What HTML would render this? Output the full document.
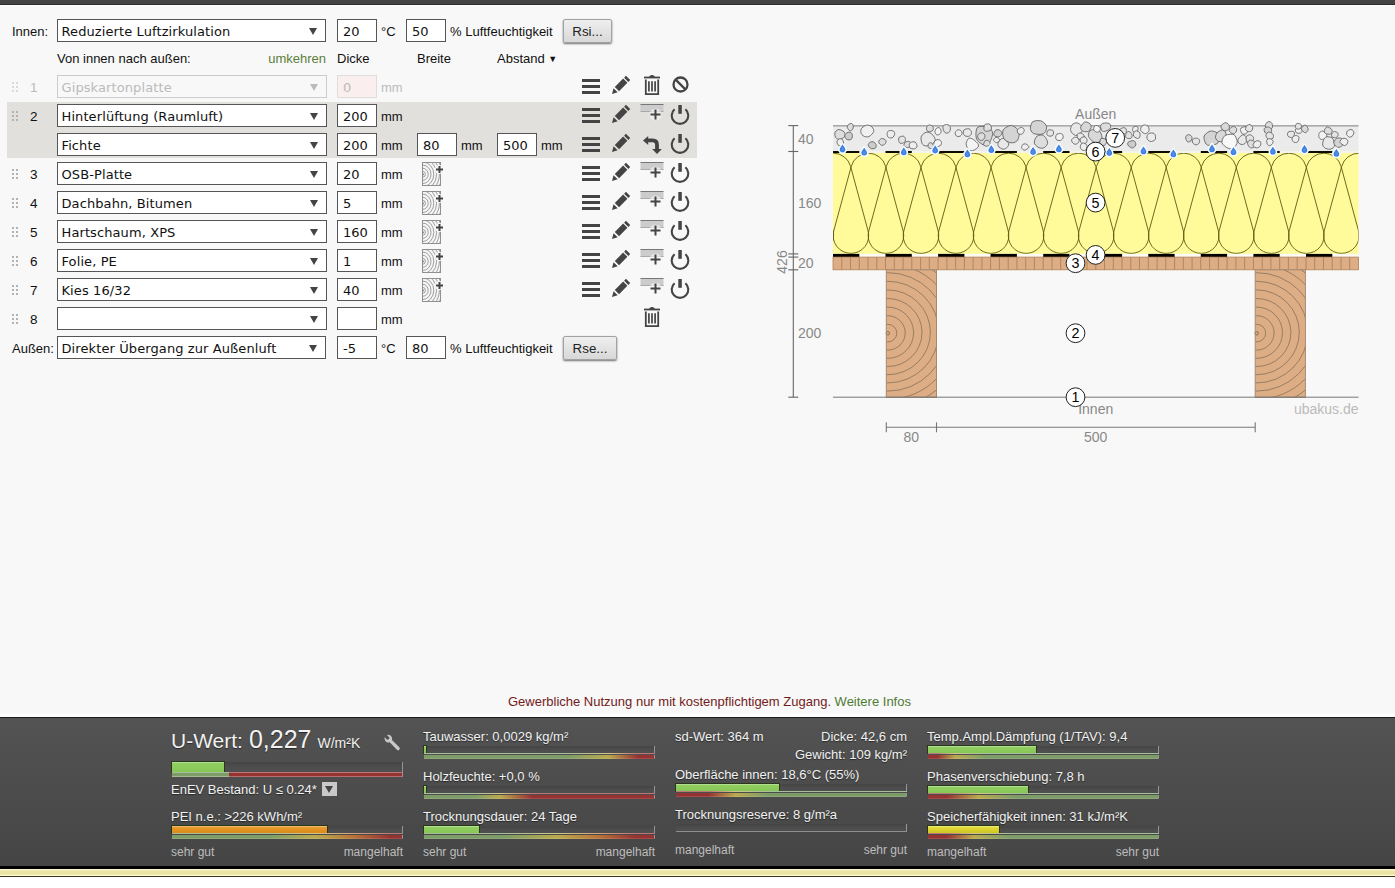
<!DOCTYPE html>
<html lang="de"><head><meta charset="utf-8"><title>U-Wert Rechner</title>
<style>
html,body{margin:0;padding:0}
body{width:1395px;height:888px;overflow:hidden;background:#fff;position:relative;font-family:"Liberation Sans",Arial,sans-serif;font-size:13px;color:#111}
#main{position:absolute;left:0;top:0;width:1395px;height:713px;background:#f8f8f8;border-bottom:1px solid #fcfcfc}
#topbar{position:absolute;left:0;top:0;width:1395px;height:4px;background:#444;border-bottom:1px solid #2e2e2e;box-shadow:0 1px 0 #fdfdfd}
.lab{position:absolute;height:23px;line-height:23px;white-space:nowrap;font-size:13px;color:#111}
.lab.dis{color:#bbb}
.lab.grn{color:#5b7d3a}
.lab.num{width:14px;text-align:left;font-size:13.5px}
.tri{font-size:9px;position:relative;top:-1px;left:0}
.sel{position:absolute;height:23px;box-sizing:border-box;border:1px solid #555;background:#fff;font-family:"DejaVu Sans",Verdana,sans-serif;font-size:13px;line-height:21px;padding-left:3.5px;padding-top:1px;letter-spacing:.1px;white-space:nowrap;color:#111}
.sel i{position:absolute;right:8.5px;top:8px;width:0;height:0;font-size:0;border-left:4px solid transparent;border-right:4px solid transparent;border-top:7px solid #444}
.sel.dis{border-color:#ccc;background:#f8f8f8;color:#bbb}
.sel.dis i{border-top-color:#bbb}
.inp{position:absolute;width:40px;height:23px;box-sizing:border-box;border:1px solid #555;background:#fff;font-family:"DejaVu Sans",Verdana,sans-serif;font-size:13px;line-height:21px;padding-left:5px;padding-top:1px;color:#111}
.inp.dis{border-color:#ddd;background:#faeeee;color:#bbb}
.btn{position:absolute;height:23.5px;box-sizing:border-box;border:1px solid #a2a2a2;border-radius:2px;background:linear-gradient(#efefef,#d8d8d8);box-shadow:0 1px 2px rgba(0,0,0,.55);font-size:13.33px;line-height:21px;padding-top:1px;text-align:center;color:#222}
.hl{position:absolute;background:#e1e0dc}
.ic{position:absolute;display:block;overflow:visible}
.diag{position:absolute;display:block}
.note{position:absolute;left:508px;top:694px;width:404px;line-height:16px;font-size:13px;white-space:nowrap;color:#731a1a}
.note span{color:#4f7a35}
.panel{position:absolute;left:0;top:717px;width:1395px;height:149px;box-sizing:border-box;border-top:1px solid #1c1c1c;background:linear-gradient(#535353,#454545)}
.pin{position:absolute;left:0;top:-718px;width:1395px;height:888px}
.pt{position:absolute;font-size:13px;line-height:16px;color:#f2f2f2;white-space:nowrap;text-shadow:0 1px 1px rgba(0,0,0,.5)}
.pf{position:absolute;font-size:12px;line-height:16px;color:#bdbdbd;white-space:nowrap}
.uw{position:absolute;white-space:nowrap;color:#f2f2f2;line-height:30px;height:30px;text-shadow:0 1px 1px rgba(0,0,0,.5)}
.u1{font-size:21px}.u2{font-size:25px;margin-left:6px}.u3{font-size:14px;margin-left:6px}
.tr{position:absolute;box-sizing:content-box;background:linear-gradient(#444,#4e4e4e 60%);border-right:1px solid #959595;margin-left:0}
.fl{position:absolute;left:0;top:0;height:100%;box-shadow:0 0 0 1px rgba(30,50,10,.75),inset 0 1px 0 rgba(255,255,255,.3)}
.ln{position:absolute;height:1px}
.st{position:absolute;height:3px;border-bottom:1px solid rgba(255,255,255,.12);border-right:1px solid #959595}
.st.big{border-bottom-color:rgba(255,255,255,.3)}
.dd{position:absolute;width:15px;height:14px;background:#c9c9c9}
.dd b{position:absolute;left:3px;top:4px;width:0;height:0;border-left:4.5px solid transparent;border-right:4.5px solid transparent;border-top:7px solid #444}
.blk{position:absolute;left:0;top:866px;width:1395px;height:3px;background:#000}
.ystrip{position:absolute;left:0;top:869px;width:1395px;height:7px;background:linear-gradient(#fffbd0,#ece6a8 30%,#e8e2a2 70%,#fffbd0 95%);border-bottom:1px solid #3a3820}
</style></head><body>
<div id="main">
<div id="topbar"></div>
<div class="lab" style="left:12px;top:20px;">Innen:</div>
<div class="sel" style="left:57px;top:19px;width:269px"><span>Reduzierte Luftzirkulation</span><i></i></div>
<div class="inp" style="left:337px;top:19px">20</div>
<div class="lab" style="left:381px;top:20px;">°C</div>
<div class="inp" style="left:406px;top:19px">50</div>
<div class="lab" style="left:450px;top:20px;">% Luftfeuchtigkeit</div>
<div class="btn" style="left:563px;top:19px;width:49px">Rsi...</div>
<div class="lab" style="left:57px;top:47px;">Von innen nach außen:</div>
<div class="lab grn" style="left:226px;top:47px;width:100px;text-align:right">umkehren</div>
<div class="lab" style="left:337px;top:47px;">Dicke</div>
<div class="lab" style="left:417px;top:47px;">Breite</div>
<div class="lab" style="left:497px;top:47px;">Abstand <span class="tri">&#9660;</span></div>
<div class="hl" style="left:7px;top:102px;width:690px;height:56px"></div>
<svg class="ic" style="left:12px;top:82px" width="6" height="10" viewBox="0 0 6 10"><rect x="0" y="0" width="2" height="2" fill="#dadada"/><rect x="4" y="0" width="2" height="2" fill="#dadada"/><rect x="0" y="4" width="2" height="2" fill="#dadada"/><rect x="4" y="4" width="2" height="2" fill="#dadada"/><rect x="0" y="8" width="2" height="2" fill="#dadada"/><rect x="4" y="8" width="2" height="2" fill="#dadada"/></svg>
<div class="lab num dis" style="left:30px;top:76px;">1</div>
<div class="sel dis" style="left:57px;top:75px;width:270px"><span>Gipskartonplatte</span><i></i></div>
<div class="inp dis" style="left:337px;top:75px">0</div>
<div class="lab dis" style="left:381px;top:76px;">mm</div>
<svg class="ic" style="left:582px;top:79px" width="18" height="15" viewBox="0 0 18 15"><rect x="0" y="0" width="18" height="3" fill="#444"/><rect x="0" y="6" width="18" height="3" fill="#444"/><rect x="0" y="12" width="18" height="3" fill="#444"/></svg>
<svg class="ic" style="left:612px;top:76px" width="18.4" height="18.4" viewBox="0 0 19 19"><g fill="#444"><polygon points="0,18.5 1.6,12.6 5.9,16.9"/><polygon points="2.9,11.3 11.5,2.7 15.9,7.1 7.3,15.7"/><polygon points="12.5,1.7 14.4,-0.2 18.8,4.2 16.9,6.1"/></g></svg>
<svg class="ic" style="left:644px;top:75px" width="16" height="20" viewBox="0 0 16 20"><g fill="none" stroke="#444"><path d="M0 2.5H16" stroke-width="1.8"/><path d="M5.6 1.4Q8 -0.4 10.4 1.4Z" stroke-width="1" fill="#444"/><path d="M1.8 4.6V19.1H14.2V4.6" stroke-width="1.8"/><path d="M4.9 6.3V16.4M8 6.3V16.4M11.1 6.3V16.4" stroke-width="1.7"/></g></svg>
<svg class="ic" style="left:671.5px;top:75.5px" width="17" height="17" viewBox="0 0 17 17"><circle cx="8.5" cy="8.5" r="7" fill="none" stroke="#444" stroke-width="2.3"/><path d="M3.6 3.6L13.4 13.4" stroke="#444" stroke-width="2.3"/></svg>
<svg class="ic" style="left:12px;top:111px" width="6" height="10" viewBox="0 0 6 10"><rect x="0" y="0" width="2" height="2" fill="#b2b2b2"/><rect x="4" y="0" width="2" height="2" fill="#b2b2b2"/><rect x="0" y="4" width="2" height="2" fill="#b2b2b2"/><rect x="4" y="4" width="2" height="2" fill="#b2b2b2"/><rect x="0" y="8" width="2" height="2" fill="#b2b2b2"/><rect x="4" y="8" width="2" height="2" fill="#b2b2b2"/></svg>
<div class="lab num" style="left:30px;top:105px;">2</div>
<div class="sel" style="left:57px;top:104px;width:270px"><span>Hinterlüftung (Raumluft)</span><i></i></div>
<div class="inp" style="left:337px;top:104px">200</div>
<div class="lab" style="left:381px;top:105px;">mm</div>
<svg class="ic" style="left:582px;top:108px" width="18" height="15" viewBox="0 0 18 15"><rect x="0" y="0" width="18" height="3" fill="#444"/><rect x="0" y="6" width="18" height="3" fill="#444"/><rect x="0" y="12" width="18" height="3" fill="#444"/></svg>
<svg class="ic" style="left:612px;top:105px" width="18.4" height="18.4" viewBox="0 0 19 19"><g fill="#444"><polygon points="0,18.5 1.6,12.6 5.9,16.9"/><polygon points="2.9,11.3 11.5,2.7 15.9,7.1 7.3,15.7"/><polygon points="12.5,1.7 14.4,-0.2 18.8,4.2 16.9,6.1"/></g></svg>
<svg class="ic" style="left:640px;top:104px" width="24" height="17" viewBox="0 0 24 17"><rect x="0.5" y="0" width="23" height="8" fill="#ccc"/><rect x="0.5" y="0" width="23" height="1" fill="#777"/><rect x="0.5" y="7" width="23" height="1" fill="#aaa"/><circle cx="15.5" cy="10.5" r="6" fill="#f6f6f4" fill-opacity=".65"/><path d="M15.5 5.5V15.5M10.5 10.5H20.5" stroke="#444" stroke-width="2" fill="none"/></svg>
<svg class="ic" style="left:670px;top:105px" width="20" height="21" viewBox="0 0 20 21"><path d="M4.6 4.3A8.3 8.3 0 1 0 15.4 4.3" fill="none" stroke="#444" stroke-width="2.1"/><rect x="8.3" y="0" width="3.5" height="8.8" fill="#444"/></svg>
<div class="sel" style="left:57px;top:133px;width:270px"><span>Fichte</span><i></i></div>
<div class="inp" style="left:337px;top:133px">200</div>
<div class="lab" style="left:381px;top:134px;">mm</div>
<div class="inp" style="left:417px;top:133px">80</div>
<div class="lab" style="left:461px;top:134px;">mm</div>
<div class="inp" style="left:497px;top:133px">500</div>
<div class="lab" style="left:541px;top:134px;">mm</div>
<svg class="ic" style="left:582px;top:137px" width="18" height="15" viewBox="0 0 18 15"><rect x="0" y="0" width="18" height="3" fill="#444"/><rect x="0" y="6" width="18" height="3" fill="#444"/><rect x="0" y="12" width="18" height="3" fill="#444"/></svg>
<svg class="ic" style="left:612px;top:134px" width="18.4" height="18.4" viewBox="0 0 19 19"><g fill="#444"><polygon points="0,18.5 1.6,12.6 5.9,16.9"/><polygon points="2.9,11.3 11.5,2.7 15.9,7.1 7.3,15.7"/><polygon points="12.5,1.7 14.4,-0.2 18.8,4.2 16.9,6.1"/></g></svg>
<svg class="ic" style="left:642px;top:134px" width="21" height="21" viewBox="0 0 21 21"><path d="M5.5 6.4H10.6Q15 6.4 15 10.8V15.4" fill="none" stroke="#444" stroke-width="3.8"/><polygon points="1,6.4 6.2,1.9 6.2,10.9" fill="#444"/><polygon points="15,20.1 10.1,15 19.9,15" fill="#444"/></svg>
<svg class="ic" style="left:670px;top:134px" width="20" height="21" viewBox="0 0 20 21"><path d="M4.6 4.3A8.3 8.3 0 1 0 15.4 4.3" fill="none" stroke="#444" stroke-width="2.1"/><rect x="8.3" y="0" width="3.5" height="8.8" fill="#444"/></svg>
<svg class="ic" style="left:12px;top:169px" width="6" height="10" viewBox="0 0 6 10"><rect x="0" y="0" width="2" height="2" fill="#b2b2b2"/><rect x="4" y="0" width="2" height="2" fill="#b2b2b2"/><rect x="0" y="4" width="2" height="2" fill="#b2b2b2"/><rect x="4" y="4" width="2" height="2" fill="#b2b2b2"/><rect x="0" y="8" width="2" height="2" fill="#b2b2b2"/><rect x="4" y="8" width="2" height="2" fill="#b2b2b2"/></svg>
<div class="lab num" style="left:30px;top:163px;">3</div>
<div class="sel" style="left:57px;top:162px;width:270px"><span>OSB-Platte</span><i></i></div>
<div class="inp" style="left:337px;top:162px">20</div>
<div class="lab" style="left:381px;top:163px;">mm</div>
<svg class="ic" style="left:422px;top:162px" width="22" height="24" viewBox="0 0 22 24"><defs><clipPath id="wc422_162"><rect x="0.5" y="0.5" width="18" height="23"/></clipPath></defs><rect x="0.5" y="0.5" width="18" height="23" fill="#f6f6f6" stroke="#919191" stroke-width="1"/><g clip-path="url(#wc422_162)" fill="none" stroke="#8e8e8e" stroke-width="0.85"><ellipse cx="0.8" cy="12.3" rx="2.6" ry="2.9"/><ellipse cx="0.8" cy="12.3" rx="5.4" ry="6.0"/><ellipse cx="0.8" cy="12.3" rx="8.2" ry="9.2"/><ellipse cx="0.8" cy="12.3" rx="11.0" ry="12.3"/><ellipse cx="0.8" cy="12.3" rx="13.8" ry="15.5"/><ellipse cx="0.8" cy="12.3" rx="16.6" ry="18.6"/><ellipse cx="0.8" cy="12.3" rx="19.4" ry="21.7"/><ellipse cx="0.8" cy="12.3" rx="22.2" ry="24.9"/><ellipse cx="0.8" cy="12.3" rx="25" ry="28.0"/></g><circle cx="1.3" cy="12.3" r="0.9" fill="#888"/><circle cx="17.5" cy="7.5" r="4.6" fill="#f8f8f8"/><path d="M17.5 4V11M14 7.5H21" stroke="#444" stroke-width="2" fill="none"/></svg>
<svg class="ic" style="left:582px;top:166px" width="18" height="15" viewBox="0 0 18 15"><rect x="0" y="0" width="18" height="3" fill="#444"/><rect x="0" y="6" width="18" height="3" fill="#444"/><rect x="0" y="12" width="18" height="3" fill="#444"/></svg>
<svg class="ic" style="left:612px;top:163px" width="18.4" height="18.4" viewBox="0 0 19 19"><g fill="#444"><polygon points="0,18.5 1.6,12.6 5.9,16.9"/><polygon points="2.9,11.3 11.5,2.7 15.9,7.1 7.3,15.7"/><polygon points="12.5,1.7 14.4,-0.2 18.8,4.2 16.9,6.1"/></g></svg>
<svg class="ic" style="left:640px;top:162px" width="24" height="17" viewBox="0 0 24 17"><rect x="0.5" y="0" width="23" height="8" fill="#ccc"/><rect x="0.5" y="0" width="23" height="1" fill="#777"/><rect x="0.5" y="7" width="23" height="1" fill="#aaa"/><circle cx="15.5" cy="10.5" r="6" fill="#f6f6f4" fill-opacity=".65"/><path d="M15.5 5.5V15.5M10.5 10.5H20.5" stroke="#444" stroke-width="2" fill="none"/></svg>
<svg class="ic" style="left:670px;top:163px" width="20" height="21" viewBox="0 0 20 21"><path d="M4.6 4.3A8.3 8.3 0 1 0 15.4 4.3" fill="none" stroke="#444" stroke-width="2.1"/><rect x="8.3" y="0" width="3.5" height="8.8" fill="#444"/></svg>
<svg class="ic" style="left:12px;top:198px" width="6" height="10" viewBox="0 0 6 10"><rect x="0" y="0" width="2" height="2" fill="#b2b2b2"/><rect x="4" y="0" width="2" height="2" fill="#b2b2b2"/><rect x="0" y="4" width="2" height="2" fill="#b2b2b2"/><rect x="4" y="4" width="2" height="2" fill="#b2b2b2"/><rect x="0" y="8" width="2" height="2" fill="#b2b2b2"/><rect x="4" y="8" width="2" height="2" fill="#b2b2b2"/></svg>
<div class="lab num" style="left:30px;top:192px;">4</div>
<div class="sel" style="left:57px;top:191px;width:270px"><span>Dachbahn, Bitumen</span><i></i></div>
<div class="inp" style="left:337px;top:191px">5</div>
<div class="lab" style="left:381px;top:192px;">mm</div>
<svg class="ic" style="left:422px;top:191px" width="22" height="24" viewBox="0 0 22 24"><defs><clipPath id="wc422_191"><rect x="0.5" y="0.5" width="18" height="23"/></clipPath></defs><rect x="0.5" y="0.5" width="18" height="23" fill="#f6f6f6" stroke="#919191" stroke-width="1"/><g clip-path="url(#wc422_191)" fill="none" stroke="#8e8e8e" stroke-width="0.85"><ellipse cx="0.8" cy="12.3" rx="2.6" ry="2.9"/><ellipse cx="0.8" cy="12.3" rx="5.4" ry="6.0"/><ellipse cx="0.8" cy="12.3" rx="8.2" ry="9.2"/><ellipse cx="0.8" cy="12.3" rx="11.0" ry="12.3"/><ellipse cx="0.8" cy="12.3" rx="13.8" ry="15.5"/><ellipse cx="0.8" cy="12.3" rx="16.6" ry="18.6"/><ellipse cx="0.8" cy="12.3" rx="19.4" ry="21.7"/><ellipse cx="0.8" cy="12.3" rx="22.2" ry="24.9"/><ellipse cx="0.8" cy="12.3" rx="25" ry="28.0"/></g><circle cx="1.3" cy="12.3" r="0.9" fill="#888"/><circle cx="17.5" cy="7.5" r="4.6" fill="#f8f8f8"/><path d="M17.5 4V11M14 7.5H21" stroke="#444" stroke-width="2" fill="none"/></svg>
<svg class="ic" style="left:582px;top:195px" width="18" height="15" viewBox="0 0 18 15"><rect x="0" y="0" width="18" height="3" fill="#444"/><rect x="0" y="6" width="18" height="3" fill="#444"/><rect x="0" y="12" width="18" height="3" fill="#444"/></svg>
<svg class="ic" style="left:612px;top:192px" width="18.4" height="18.4" viewBox="0 0 19 19"><g fill="#444"><polygon points="0,18.5 1.6,12.6 5.9,16.9"/><polygon points="2.9,11.3 11.5,2.7 15.9,7.1 7.3,15.7"/><polygon points="12.5,1.7 14.4,-0.2 18.8,4.2 16.9,6.1"/></g></svg>
<svg class="ic" style="left:640px;top:191px" width="24" height="17" viewBox="0 0 24 17"><rect x="0.5" y="0" width="23" height="8" fill="#ccc"/><rect x="0.5" y="0" width="23" height="1" fill="#777"/><rect x="0.5" y="7" width="23" height="1" fill="#aaa"/><circle cx="15.5" cy="10.5" r="6" fill="#f6f6f4" fill-opacity=".65"/><path d="M15.5 5.5V15.5M10.5 10.5H20.5" stroke="#444" stroke-width="2" fill="none"/></svg>
<svg class="ic" style="left:670px;top:192px" width="20" height="21" viewBox="0 0 20 21"><path d="M4.6 4.3A8.3 8.3 0 1 0 15.4 4.3" fill="none" stroke="#444" stroke-width="2.1"/><rect x="8.3" y="0" width="3.5" height="8.8" fill="#444"/></svg>
<svg class="ic" style="left:12px;top:227px" width="6" height="10" viewBox="0 0 6 10"><rect x="0" y="0" width="2" height="2" fill="#b2b2b2"/><rect x="4" y="0" width="2" height="2" fill="#b2b2b2"/><rect x="0" y="4" width="2" height="2" fill="#b2b2b2"/><rect x="4" y="4" width="2" height="2" fill="#b2b2b2"/><rect x="0" y="8" width="2" height="2" fill="#b2b2b2"/><rect x="4" y="8" width="2" height="2" fill="#b2b2b2"/></svg>
<div class="lab num" style="left:30px;top:221px;">5</div>
<div class="sel" style="left:57px;top:220px;width:270px"><span>Hartschaum, XPS</span><i></i></div>
<div class="inp" style="left:337px;top:220px">160</div>
<div class="lab" style="left:381px;top:221px;">mm</div>
<svg class="ic" style="left:422px;top:220px" width="22" height="24" viewBox="0 0 22 24"><defs><clipPath id="wc422_220"><rect x="0.5" y="0.5" width="18" height="23"/></clipPath></defs><rect x="0.5" y="0.5" width="18" height="23" fill="#f6f6f6" stroke="#919191" stroke-width="1"/><g clip-path="url(#wc422_220)" fill="none" stroke="#8e8e8e" stroke-width="0.85"><ellipse cx="0.8" cy="12.3" rx="2.6" ry="2.9"/><ellipse cx="0.8" cy="12.3" rx="5.4" ry="6.0"/><ellipse cx="0.8" cy="12.3" rx="8.2" ry="9.2"/><ellipse cx="0.8" cy="12.3" rx="11.0" ry="12.3"/><ellipse cx="0.8" cy="12.3" rx="13.8" ry="15.5"/><ellipse cx="0.8" cy="12.3" rx="16.6" ry="18.6"/><ellipse cx="0.8" cy="12.3" rx="19.4" ry="21.7"/><ellipse cx="0.8" cy="12.3" rx="22.2" ry="24.9"/><ellipse cx="0.8" cy="12.3" rx="25" ry="28.0"/></g><circle cx="1.3" cy="12.3" r="0.9" fill="#888"/><circle cx="17.5" cy="7.5" r="4.6" fill="#f8f8f8"/><path d="M17.5 4V11M14 7.5H21" stroke="#444" stroke-width="2" fill="none"/></svg>
<svg class="ic" style="left:582px;top:224px" width="18" height="15" viewBox="0 0 18 15"><rect x="0" y="0" width="18" height="3" fill="#444"/><rect x="0" y="6" width="18" height="3" fill="#444"/><rect x="0" y="12" width="18" height="3" fill="#444"/></svg>
<svg class="ic" style="left:612px;top:221px" width="18.4" height="18.4" viewBox="0 0 19 19"><g fill="#444"><polygon points="0,18.5 1.6,12.6 5.9,16.9"/><polygon points="2.9,11.3 11.5,2.7 15.9,7.1 7.3,15.7"/><polygon points="12.5,1.7 14.4,-0.2 18.8,4.2 16.9,6.1"/></g></svg>
<svg class="ic" style="left:640px;top:220px" width="24" height="17" viewBox="0 0 24 17"><rect x="0.5" y="0" width="23" height="8" fill="#ccc"/><rect x="0.5" y="0" width="23" height="1" fill="#777"/><rect x="0.5" y="7" width="23" height="1" fill="#aaa"/><circle cx="15.5" cy="10.5" r="6" fill="#f6f6f4" fill-opacity=".65"/><path d="M15.5 5.5V15.5M10.5 10.5H20.5" stroke="#444" stroke-width="2" fill="none"/></svg>
<svg class="ic" style="left:670px;top:221px" width="20" height="21" viewBox="0 0 20 21"><path d="M4.6 4.3A8.3 8.3 0 1 0 15.4 4.3" fill="none" stroke="#444" stroke-width="2.1"/><rect x="8.3" y="0" width="3.5" height="8.8" fill="#444"/></svg>
<svg class="ic" style="left:12px;top:256px" width="6" height="10" viewBox="0 0 6 10"><rect x="0" y="0" width="2" height="2" fill="#b2b2b2"/><rect x="4" y="0" width="2" height="2" fill="#b2b2b2"/><rect x="0" y="4" width="2" height="2" fill="#b2b2b2"/><rect x="4" y="4" width="2" height="2" fill="#b2b2b2"/><rect x="0" y="8" width="2" height="2" fill="#b2b2b2"/><rect x="4" y="8" width="2" height="2" fill="#b2b2b2"/></svg>
<div class="lab num" style="left:30px;top:250px;">6</div>
<div class="sel" style="left:57px;top:249px;width:270px"><span>Folie, PE</span><i></i></div>
<div class="inp" style="left:337px;top:249px">1</div>
<div class="lab" style="left:381px;top:250px;">mm</div>
<svg class="ic" style="left:422px;top:249px" width="22" height="24" viewBox="0 0 22 24"><defs><clipPath id="wc422_249"><rect x="0.5" y="0.5" width="18" height="23"/></clipPath></defs><rect x="0.5" y="0.5" width="18" height="23" fill="#f6f6f6" stroke="#919191" stroke-width="1"/><g clip-path="url(#wc422_249)" fill="none" stroke="#8e8e8e" stroke-width="0.85"><ellipse cx="0.8" cy="12.3" rx="2.6" ry="2.9"/><ellipse cx="0.8" cy="12.3" rx="5.4" ry="6.0"/><ellipse cx="0.8" cy="12.3" rx="8.2" ry="9.2"/><ellipse cx="0.8" cy="12.3" rx="11.0" ry="12.3"/><ellipse cx="0.8" cy="12.3" rx="13.8" ry="15.5"/><ellipse cx="0.8" cy="12.3" rx="16.6" ry="18.6"/><ellipse cx="0.8" cy="12.3" rx="19.4" ry="21.7"/><ellipse cx="0.8" cy="12.3" rx="22.2" ry="24.9"/><ellipse cx="0.8" cy="12.3" rx="25" ry="28.0"/></g><circle cx="1.3" cy="12.3" r="0.9" fill="#888"/><circle cx="17.5" cy="7.5" r="4.6" fill="#f8f8f8"/><path d="M17.5 4V11M14 7.5H21" stroke="#444" stroke-width="2" fill="none"/></svg>
<svg class="ic" style="left:582px;top:253px" width="18" height="15" viewBox="0 0 18 15"><rect x="0" y="0" width="18" height="3" fill="#444"/><rect x="0" y="6" width="18" height="3" fill="#444"/><rect x="0" y="12" width="18" height="3" fill="#444"/></svg>
<svg class="ic" style="left:612px;top:250px" width="18.4" height="18.4" viewBox="0 0 19 19"><g fill="#444"><polygon points="0,18.5 1.6,12.6 5.9,16.9"/><polygon points="2.9,11.3 11.5,2.7 15.9,7.1 7.3,15.7"/><polygon points="12.5,1.7 14.4,-0.2 18.8,4.2 16.9,6.1"/></g></svg>
<svg class="ic" style="left:640px;top:249px" width="24" height="17" viewBox="0 0 24 17"><rect x="0.5" y="0" width="23" height="8" fill="#ccc"/><rect x="0.5" y="0" width="23" height="1" fill="#777"/><rect x="0.5" y="7" width="23" height="1" fill="#aaa"/><circle cx="15.5" cy="10.5" r="6" fill="#f6f6f4" fill-opacity=".65"/><path d="M15.5 5.5V15.5M10.5 10.5H20.5" stroke="#444" stroke-width="2" fill="none"/></svg>
<svg class="ic" style="left:670px;top:250px" width="20" height="21" viewBox="0 0 20 21"><path d="M4.6 4.3A8.3 8.3 0 1 0 15.4 4.3" fill="none" stroke="#444" stroke-width="2.1"/><rect x="8.3" y="0" width="3.5" height="8.8" fill="#444"/></svg>
<svg class="ic" style="left:12px;top:285px" width="6" height="10" viewBox="0 0 6 10"><rect x="0" y="0" width="2" height="2" fill="#b2b2b2"/><rect x="4" y="0" width="2" height="2" fill="#b2b2b2"/><rect x="0" y="4" width="2" height="2" fill="#b2b2b2"/><rect x="4" y="4" width="2" height="2" fill="#b2b2b2"/><rect x="0" y="8" width="2" height="2" fill="#b2b2b2"/><rect x="4" y="8" width="2" height="2" fill="#b2b2b2"/></svg>
<div class="lab num" style="left:30px;top:279px;">7</div>
<div class="sel" style="left:57px;top:278px;width:270px"><span>Kies 16/32</span><i></i></div>
<div class="inp" style="left:337px;top:278px">40</div>
<div class="lab" style="left:381px;top:279px;">mm</div>
<svg class="ic" style="left:422px;top:278px" width="22" height="24" viewBox="0 0 22 24"><defs><clipPath id="wc422_278"><rect x="0.5" y="0.5" width="18" height="23"/></clipPath></defs><rect x="0.5" y="0.5" width="18" height="23" fill="#f6f6f6" stroke="#919191" stroke-width="1"/><g clip-path="url(#wc422_278)" fill="none" stroke="#8e8e8e" stroke-width="0.85"><ellipse cx="0.8" cy="12.3" rx="2.6" ry="2.9"/><ellipse cx="0.8" cy="12.3" rx="5.4" ry="6.0"/><ellipse cx="0.8" cy="12.3" rx="8.2" ry="9.2"/><ellipse cx="0.8" cy="12.3" rx="11.0" ry="12.3"/><ellipse cx="0.8" cy="12.3" rx="13.8" ry="15.5"/><ellipse cx="0.8" cy="12.3" rx="16.6" ry="18.6"/><ellipse cx="0.8" cy="12.3" rx="19.4" ry="21.7"/><ellipse cx="0.8" cy="12.3" rx="22.2" ry="24.9"/><ellipse cx="0.8" cy="12.3" rx="25" ry="28.0"/></g><circle cx="1.3" cy="12.3" r="0.9" fill="#888"/><circle cx="17.5" cy="7.5" r="4.6" fill="#f8f8f8"/><path d="M17.5 4V11M14 7.5H21" stroke="#444" stroke-width="2" fill="none"/></svg>
<svg class="ic" style="left:582px;top:282px" width="18" height="15" viewBox="0 0 18 15"><rect x="0" y="0" width="18" height="3" fill="#444"/><rect x="0" y="6" width="18" height="3" fill="#444"/><rect x="0" y="12" width="18" height="3" fill="#444"/></svg>
<svg class="ic" style="left:612px;top:279px" width="18.4" height="18.4" viewBox="0 0 19 19"><g fill="#444"><polygon points="0,18.5 1.6,12.6 5.9,16.9"/><polygon points="2.9,11.3 11.5,2.7 15.9,7.1 7.3,15.7"/><polygon points="12.5,1.7 14.4,-0.2 18.8,4.2 16.9,6.1"/></g></svg>
<svg class="ic" style="left:640px;top:278px" width="24" height="17" viewBox="0 0 24 17"><rect x="0.5" y="0" width="23" height="8" fill="#ccc"/><rect x="0.5" y="0" width="23" height="1" fill="#777"/><rect x="0.5" y="7" width="23" height="1" fill="#aaa"/><circle cx="15.5" cy="10.5" r="6" fill="#f6f6f4" fill-opacity=".65"/><path d="M15.5 5.5V15.5M10.5 10.5H20.5" stroke="#444" stroke-width="2" fill="none"/></svg>
<svg class="ic" style="left:670px;top:279px" width="20" height="21" viewBox="0 0 20 21"><path d="M4.6 4.3A8.3 8.3 0 1 0 15.4 4.3" fill="none" stroke="#444" stroke-width="2.1"/><rect x="8.3" y="0" width="3.5" height="8.8" fill="#444"/></svg>
<svg class="ic" style="left:12px;top:314px" width="6" height="10" viewBox="0 0 6 10"><rect x="0" y="0" width="2" height="2" fill="#b2b2b2"/><rect x="4" y="0" width="2" height="2" fill="#b2b2b2"/><rect x="0" y="4" width="2" height="2" fill="#b2b2b2"/><rect x="4" y="4" width="2" height="2" fill="#b2b2b2"/><rect x="0" y="8" width="2" height="2" fill="#b2b2b2"/><rect x="4" y="8" width="2" height="2" fill="#b2b2b2"/></svg>
<div class="lab num" style="left:30px;top:308px;">8</div>
<div class="sel" style="left:57px;top:307px;width:270px"><span></span><i></i></div>
<div class="inp" style="left:337px;top:307px"></div>
<div class="lab" style="left:381px;top:308px;">mm</div>
<svg class="ic" style="left:644px;top:307px" width="16" height="20" viewBox="0 0 16 20"><g fill="none" stroke="#444"><path d="M0 2.5H16" stroke-width="1.8"/><path d="M5.6 1.4Q8 -0.4 10.4 1.4Z" stroke-width="1" fill="#444"/><path d="M1.8 4.6V19.1H14.2V4.6" stroke-width="1.8"/><path d="M4.9 6.3V16.4M8 6.3V16.4M11.1 6.3V16.4" stroke-width="1.7"/></g></svg>
<div class="lab" style="left:12px;top:337px;">Außen:</div>
<div class="sel" style="left:57px;top:336px;width:269px"><span>Direkter Übergang zur Außenluft</span><i></i></div>
<div class="inp" style="left:337px;top:336px">-5</div>
<div class="lab" style="left:381px;top:337px;">°C</div>
<div class="inp" style="left:406px;top:336px">80</div>
<div class="lab" style="left:450px;top:337px;">% Luftfeuchtigkeit</div>
<div class="btn" style="left:563px;top:336px;width:54px">Rse...</div>
<svg class="diag" style="left:760px;top:95px" width="635" height="370" viewBox="760 95 635 370">
<defs>
<clipPath id="cpx"><rect x="833.0" y="153.0" width="525.5" height="100.9"/></clipPath>
<clipPath id="cpb1"><rect x="886.3" y="269.8" width="50.2" height="127.39999999999998"/></clipPath>
<clipPath id="cpb2"><rect x="1255.2" y="269.8" width="50.2" height="127.39999999999998"/></clipPath>
<radialGradient id="dg" cx="0.5" cy="0.6" r="0.6"><stop offset="0" stop-color="#5594ee"/><stop offset="1" stop-color="#2f6fd6"/></radialGradient>
</defs>
<rect x="833.0" y="125.6" width="525.5" height="25.400000000000006" fill="#ebebeb"/>
<rect x="833.0" y="125.0" width="525.5" height="1.6" fill="#aaa"/>
<g stroke="#555" stroke-width="0.8">
<path d="M852.9 124.8Q853.5 125.8 853.3 127.0L853.1 128.0Q852.9 129.3 852.1 129.9L851.5 130.4Q850.6 131.0 849.8 130.5L849.2 130.2Q848.4 129.7 847.8 128.6L847.4 127.8Q846.9 126.7 847.6 125.8L848.1 125.0Q848.7 124.1 849.9 123.8L850.8 123.5Q851.9 123.2 852.5 124.1Z" fill="#ddd"/>
<path d="M834.8 134.2Q834.6 132.2 836.1 131.0L837.2 130.1Q838.7 128.9 840.7 129.9L842.3 130.6Q844.4 131.6 844.8 133.3L845.1 134.6Q845.5 136.4 843.4 137.7L841.8 138.7Q839.7 140.0 838.1 139.2L836.8 138.6Q835.2 137.7 835.0 135.7Z" fill="#ddd"/>
<path d="M852.3 137.1Q852.2 138.8 851.0 139.3L850.2 139.7Q849.0 140.2 847.8 139.7L846.9 139.4Q845.7 138.9 845.2 137.6L844.9 136.6Q844.5 135.3 845.3 134.4L846.0 133.7Q846.8 132.7 848.0 132.3L848.9 132.1Q850.0 131.7 850.9 132.6L851.6 133.2Q852.5 134.1 852.4 135.8Z" fill="#ccc"/>
<path d="M842.2 139.5Q843.1 140.1 843.3 141.2L843.4 142.0Q843.6 143.1 843.4 143.8L843.3 144.3Q843.2 145.0 842.4 145.3L841.7 145.6Q840.9 145.9 840.0 145.8L839.2 145.7Q838.3 145.6 837.7 144.2L837.2 143.2Q836.6 141.8 837.2 140.9L837.7 140.2Q838.3 139.4 839.2 139.1L839.8 138.8Q840.7 138.5 841.5 139.1Z" fill="#eee"/>
<path d="M873.7 131.4Q873.6 132.6 871.9 134.2L870.6 135.5Q868.9 137.1 867.2 136.9L865.8 136.8Q864.1 136.7 862.9 135.5L861.9 134.6Q860.8 133.4 860.8 131.6L860.9 130.2Q860.9 128.4 862.9 127.1L864.4 126.1Q866.4 124.8 868.2 125.2L869.6 125.6Q871.3 126.0 872.2 127.2L872.9 128.1Q873.8 129.2 873.7 130.5Z" fill="#f0f0f0"/>
<path d="M889.5 130.6Q890.6 130.3 892.0 130.7L893.1 131.1Q894.5 131.6 894.6 132.7L894.7 133.5Q894.9 134.6 893.9 135.9L893.2 137.0Q892.2 138.3 890.7 138.0L889.5 137.7Q888.0 137.4 887.6 136.5L887.4 135.8Q887.0 135.0 887.2 133.6L887.4 132.6Q887.6 131.2 888.7 130.9Z" fill="#eee"/>
<path d="M885.3 143.6Q884.8 144.4 883.7 144.9L882.9 145.2Q881.8 145.7 880.7 144.8L879.9 144.1Q878.9 143.2 878.8 142.4L878.8 141.8Q878.7 141.0 879.6 139.9L880.4 139.2Q881.4 138.1 882.9 138.7L884.0 139.1Q885.5 139.6 885.8 140.5L886.0 141.2Q886.2 142.1 885.7 143.0Z" fill="#ddd"/>
<path d="M869.1 147.0Q867.7 145.8 868.4 144.5L868.9 143.5Q869.6 142.2 870.8 141.9L871.8 141.7Q873.1 141.4 874.2 142.4L875.1 143.2Q876.2 144.3 876.2 145.6L876.1 146.7Q876.1 148.1 874.4 148.5L873.1 148.7Q871.5 149.1 870.1 147.9Z" fill="#ccc"/>
<path d="M905.4 140.8Q905.3 142.3 903.6 142.8L902.3 143.2Q900.6 143.7 899.9 143.1L899.4 142.6Q898.8 142.0 898.7 140.3L898.6 139.0Q898.4 137.3 900.2 136.7L901.6 136.3Q903.5 135.7 904.2 136.6L904.8 137.3Q905.5 138.2 905.4 139.7Z" fill="#e4e4e4"/>
<path d="M910.7 143.3Q911.0 144.3 910.7 145.0L910.5 145.5Q910.2 146.2 909.4 146.8L908.7 147.3Q907.8 147.9 906.7 147.4L905.9 147.0Q904.8 146.5 904.4 146.2L904.0 145.9Q903.6 145.6 904.1 144.4L904.5 143.4Q905.0 142.2 905.8 141.9L906.5 141.6Q907.3 141.3 908.3 141.4L909.1 141.5Q910.1 141.6 910.4 142.6Z" fill="#ddd"/>
<path d="M910.6 142.6Q911.4 141.9 912.9 141.8L914.0 141.8Q915.5 141.7 916.2 143.4L916.8 144.7Q917.5 146.4 916.6 147.4L915.8 148.1Q914.8 149.1 913.0 148.9L911.5 148.7Q909.7 148.5 909.5 146.9L909.3 145.6Q909.0 143.9 909.9 143.2Z" fill="#eee"/>
<path d="M928.5 125.3Q929.3 124.7 930.2 125.0L931.0 125.3Q932.0 125.7 932.5 126.2L932.9 126.7Q933.4 127.3 933.3 128.4L933.3 129.3Q933.2 130.5 931.8 131.0L930.8 131.4Q929.4 131.9 928.4 131.5L927.7 131.2Q926.7 130.7 926.6 129.6L926.5 128.8Q926.5 127.7 926.7 127.2L926.9 126.9Q927.1 126.4 927.9 125.8Z" fill="#ddd"/>
<path d="M936.9 134.9Q936.0 134.8 935.6 133.6L935.2 132.7Q934.8 131.5 935.3 130.4L935.6 129.5Q936.1 128.3 937.1 128.0L937.8 127.7Q938.8 127.4 939.5 127.9L940.0 128.3Q940.7 128.8 940.9 130.2L941.1 131.3Q941.2 132.8 940.3 133.5L939.6 134.1Q938.7 134.9 937.7 134.9Z" fill="#f4f4f4"/>
<path d="M950.1 130.3Q949.8 132.0 948.8 132.5L948.1 132.9Q947.1 133.4 946.0 133.0L945.2 132.7Q944.2 132.2 943.6 130.5L943.2 129.1Q942.6 127.3 943.1 126.4L943.6 125.7Q944.1 124.8 945.6 124.7L946.7 124.6Q948.2 124.4 949.1 125.5L949.8 126.3Q950.7 127.4 950.4 129.0Z" fill="#e4e4e4"/>
<path d="M933.4 143.1Q931.9 144.9 929.3 145.4L927.4 145.8Q924.9 146.3 923.7 145.3L922.8 144.5Q921.7 143.5 921.3 141.0L921.0 139.0Q920.6 136.5 922.5 134.7L924.0 133.4Q926.0 131.6 928.0 132.2L929.7 132.7Q931.7 133.3 933.3 135.7L934.5 137.5Q936.1 139.9 934.6 141.7Z" fill="#e8e8e8"/>
<path d="M938.9 146.3Q937.6 146.9 936.4 146.1L935.4 145.5Q934.1 144.8 934.0 143.8L933.9 143.1Q933.7 142.1 934.9 141.1L935.8 140.3Q937.0 139.3 938.2 139.6L939.1 139.8Q940.4 140.1 940.9 141.0L941.2 141.7Q941.7 142.6 941.5 143.5L941.4 144.2Q941.2 145.1 939.9 145.7Z" fill="#f4f4f4"/>
<path d="M928.3 144.7Q928.6 143.5 929.1 143.1L929.5 142.8Q930.0 142.4 930.9 142.8L931.6 143.1Q932.5 143.5 932.9 144.7L933.3 145.6Q933.7 146.7 933.1 147.5L932.7 148.1Q932.1 148.8 930.9 148.5L930.0 148.3Q928.8 148.0 928.5 147.6L928.2 147.2Q927.9 146.8 928.1 145.6Z" fill="#ddd"/>
<path d="M955.3 134.1Q954.7 132.8 955.7 131.6L956.6 130.7Q957.6 129.6 958.8 129.8L959.6 129.9Q960.8 130.1 961.4 131.3L961.9 132.2Q962.5 133.3 961.7 134.4L961.1 135.3Q960.4 136.4 959.0 136.4L957.9 136.5Q956.4 136.5 955.8 135.2Z" fill="#eee"/>
<path d="M970.7 130.3Q971.4 131.4 971.5 132.4L971.5 133.2Q971.5 134.3 970.5 135.2L969.7 135.8Q968.7 136.7 967.2 136.4L966.0 136.2Q964.5 135.9 964.0 135.0L963.6 134.3Q963.2 133.4 963.3 132.0L963.5 131.0Q963.6 129.6 965.7 129.1L967.2 128.8Q969.2 128.3 970.0 129.4Z" fill="#e8e8e8"/>
<path d="M990.7 140.4Q989.2 144.3 987.1 144.7L985.4 145.1Q983.3 145.5 980.6 143.3L978.4 141.6Q975.7 139.4 975.9 135.4L976.0 132.2Q976.2 128.1 977.7 127.3L979.0 126.7Q980.5 125.9 984.0 126.5L986.7 127.0Q990.1 127.5 991.3 129.6L992.2 131.3Q993.4 133.4 991.9 137.3Z" fill="#d4d4d4"/>
<path d="M991.2 126.7Q991.8 128.3 991.3 129.1L991.0 129.7Q990.6 130.5 988.9 130.9L987.7 131.2Q986.0 131.5 985.2 131.0L984.6 130.6Q983.7 130.1 983.9 128.1L984.1 126.6Q984.2 124.7 985.1 124.4L985.7 124.2Q986.5 123.9 987.8 123.9L988.8 123.9Q990.1 124.0 990.7 125.5Z" fill="#e0e0e0"/>
<path d="M980.7 132.9Q981.9 132.4 982.9 133.1L983.7 133.7Q984.8 134.4 984.9 135.5L984.9 136.4Q985.0 137.6 984.1 138.6L983.5 139.4Q982.6 140.4 981.5 140.4L980.6 140.3Q979.5 140.3 978.7 139.0L978.1 138.1Q977.2 136.8 977.7 135.7L978.1 134.8Q978.6 133.7 979.8 133.2Z" fill="#ddd"/>
<path d="M984.4 141.9Q985.0 140.4 986.2 140.3L987.2 140.3Q988.4 140.3 989.1 141.3L989.7 142.1Q990.5 143.1 990.1 144.1L989.9 144.8Q989.5 145.8 987.9 146.0L986.6 146.1Q985.0 146.2 984.4 145.6L983.9 145.2Q983.3 144.6 983.9 143.1Z" fill="#ddd"/>
<path d="M976.0 141.7Q978.2 143.5 978.4 144.8L978.6 145.8Q978.8 147.0 976.6 148.5L974.8 149.7Q972.6 151.2 971.0 150.8L969.8 150.5Q968.2 150.0 967.3 147.7L966.5 145.9Q965.6 143.6 966.7 141.5L967.5 139.9Q968.6 137.8 969.9 138.1L970.9 138.3Q972.2 138.5 974.4 140.3Z" fill="#f4f4f4"/>
<path d="M993.8 134.5Q993.6 133.7 994.3 132.2L994.9 131.1Q995.6 129.7 996.9 129.7L998.0 129.7Q999.3 129.6 1000.4 130.7L1001.2 131.6Q1002.2 132.7 1001.9 133.6L1001.6 134.3Q1001.2 135.2 1000.3 135.9L999.6 136.5Q998.7 137.2 997.1 136.8L995.8 136.5Q994.1 136.0 993.9 135.2Z" fill="#d0d0d0"/>
<path d="M1000.3 148.0Q998.7 147.2 998.2 145.7L997.9 144.6Q997.5 143.2 998.9 141.4L1000.0 140.0Q1001.5 138.3 1002.7 138.4L1003.6 138.5Q1004.8 138.7 1006.5 140.6L1007.8 142.0Q1009.4 143.9 1008.5 145.4L1007.7 146.6Q1006.8 148.0 1005.5 148.6L1004.5 149.0Q1003.2 149.5 1001.6 148.7Z" fill="#e8e8e8"/>
<path d="M998.5 141.8Q997.8 142.3 997.0 142.5L996.4 142.6Q995.6 142.8 994.9 141.9L994.4 141.3Q993.6 140.5 993.5 140.1L993.4 139.9Q993.3 139.5 993.9 138.8L994.4 138.3Q995.0 137.6 995.9 137.5L996.5 137.5Q997.3 137.4 998.0 137.8L998.5 138.1Q999.2 138.5 999.3 139.3L999.5 140.0Q999.6 140.8 999.0 141.3Z" fill="#eee"/>
<path d="M1013.8 142.6Q1011.3 143.4 1008.4 142.0L1006.2 140.8Q1003.3 139.4 1002.9 135.8L1002.6 133.0Q1002.2 129.5 1005.6 127.6L1008.2 126.2Q1011.5 124.3 1014.5 126.7L1016.8 128.5Q1019.8 130.9 1019.2 134.5L1018.7 137.4Q1018.1 141.0 1015.7 141.9Z" fill="#d4d4d4"/>
<path d="M1020.6 127.6Q1021.4 127.3 1022.1 127.6L1022.6 127.8Q1023.3 128.1 1023.7 129.0L1024.1 129.6Q1024.5 130.5 1023.9 131.7L1023.4 132.6Q1022.7 133.8 1021.9 134.1L1021.3 134.3Q1020.5 134.5 1019.5 134.1L1018.7 133.7Q1017.7 133.3 1017.5 132.1L1017.3 131.2Q1017.1 130.0 1017.8 129.3L1018.4 128.8Q1019.1 128.0 1019.9 127.8Z" fill="#eee"/>
<path d="M1028.8 147.4Q1028.6 148.0 1027.2 148.9L1026.1 149.6Q1024.7 150.5 1024.0 150.1L1023.5 149.8Q1022.8 149.4 1022.2 148.7L1021.8 148.2Q1021.3 147.5 1021.8 146.3L1022.2 145.4Q1022.7 144.2 1023.9 144.0L1024.8 143.9Q1026.0 143.7 1027.0 144.6L1027.9 145.4Q1029.0 146.3 1028.9 146.9Z" fill="#eee"/>
<path d="M1031.3 123.8Q1032.0 121.1 1035.3 120.8L1037.9 120.6Q1041.2 120.2 1043.5 122.3L1045.2 124.0Q1047.5 126.1 1046.4 129.1L1045.6 131.5Q1044.5 134.5 1040.3 134.4L1037.0 134.3Q1032.8 134.1 1031.8 132.1L1030.9 130.5Q1029.9 128.5 1030.7 125.9Z" fill="#d4d4d4"/>
<path d="M1040.0 135.1Q1042.1 134.5 1043.4 135.5L1044.4 136.2Q1045.6 137.2 1046.6 139.4L1047.3 141.1Q1048.3 143.4 1046.8 145.2L1045.6 146.6Q1044.0 148.4 1042.2 148.2L1040.7 148.1Q1038.9 148.0 1037.0 146.4L1035.5 145.1Q1033.6 143.5 1034.5 140.8L1035.2 138.8Q1036.1 136.1 1038.3 135.5Z" fill="#ddd"/>
<path d="M1048.3 130.1Q1048.9 129.7 1050.4 129.8L1051.6 130.0Q1053.1 130.2 1053.3 131.2L1053.5 132.0Q1053.8 133.1 1053.5 133.9L1053.3 134.5Q1053.1 135.3 1052.0 135.7L1051.1 136.1Q1049.9 136.4 1048.7 135.9L1047.8 135.5Q1046.6 135.0 1046.8 133.5L1047.1 132.4Q1047.3 130.9 1047.9 130.4Z" fill="#e4e4e4"/>
<path d="M1063.2 136.8Q1063.3 138.1 1062.3 139.1L1061.5 139.8Q1060.4 140.7 1059.0 140.5L1057.8 140.3Q1056.4 140.1 1056.1 139.1L1055.8 138.3Q1055.5 137.3 1055.9 136.1L1056.2 135.2Q1056.5 134.0 1058.1 133.8L1059.3 133.6Q1060.9 133.4 1061.6 133.8L1062.2 134.1Q1062.9 134.5 1063.0 135.8Z" fill="#f4f4f4"/>
<path d="M1072.5 133.4Q1070.8 131.9 1070.7 130.6L1070.6 129.5Q1070.5 128.1 1071.2 126.6L1071.8 125.4Q1072.5 123.9 1074.3 123.3L1075.6 122.9Q1077.3 122.4 1079.2 123.9L1080.6 125.1Q1082.4 126.6 1082.9 127.3L1083.2 127.8Q1083.7 128.5 1082.6 130.3L1081.7 131.7Q1080.6 133.5 1078.8 134.4L1077.4 135.2Q1075.6 136.1 1073.9 134.6Z" fill="#e8e8e8"/>
<path d="M1084.4 131.6Q1082.1 131.4 1081.4 129.9L1080.8 128.7Q1080.1 127.2 1081.7 125.1L1083.0 123.4Q1084.5 121.3 1086.5 122.0L1088.1 122.6Q1090.1 123.4 1090.7 124.8L1091.1 125.9Q1091.6 127.2 1090.5 129.0L1089.6 130.3Q1088.4 132.0 1086.2 131.8Z" fill="#d8d8d8"/>
<path d="M1082.3 133.6Q1083.6 134.2 1083.9 135.3L1084.1 136.1Q1084.3 137.2 1083.8 137.9L1083.4 138.4Q1082.9 139.1 1082.3 139.4L1081.8 139.6Q1081.1 139.9 1079.9 139.5L1079.0 139.2Q1077.7 138.8 1077.5 137.7L1077.3 136.8Q1077.1 135.8 1077.2 135.1L1077.2 134.6Q1077.3 133.9 1078.3 133.5L1079.1 133.1Q1080.0 132.7 1081.3 133.2Z" fill="#e8e8e8"/>
<path d="M1076.0 144.2Q1075.0 144.6 1073.8 143.7L1072.9 142.9Q1071.7 142.0 1071.7 141.0L1071.6 140.3Q1071.5 139.4 1072.7 138.5L1073.6 137.8Q1074.7 136.9 1075.8 137.3L1076.6 137.5Q1077.7 137.8 1078.3 138.7L1078.8 139.5Q1079.5 140.4 1078.9 141.5L1078.4 142.4Q1077.7 143.5 1076.7 143.9Z" fill="#e8e8e8"/>
<path d="M1086.8 139.2Q1087.3 140.3 1087.0 141.2L1086.7 142.0Q1086.4 142.9 1085.3 143.3L1084.4 143.6Q1083.3 144.1 1082.3 143.5L1081.6 143.1Q1080.6 142.6 1080.4 141.2L1080.1 140.0Q1079.9 138.6 1081.1 137.9L1082.0 137.4Q1083.2 136.7 1084.2 136.9L1085.0 137.0Q1086.0 137.3 1086.5 138.4Z" fill="#e8e8e8"/>
<path d="M1083.8 150.5Q1082.8 150.5 1082.1 149.9L1081.5 149.5Q1080.8 149.0 1080.5 147.9L1080.3 147.1Q1080.1 146.1 1080.7 145.1L1081.1 144.4Q1081.7 143.4 1082.3 143.2L1082.8 143.1Q1083.4 142.9 1084.5 143.4L1085.4 143.8Q1086.6 144.4 1086.8 145.4L1087.0 146.2Q1087.2 147.2 1086.7 148.4L1086.2 149.3Q1085.7 150.5 1084.6 150.5Z" fill="#eee"/>
<path d="M1101.7 135.5Q1102.7 138.4 1101.3 139.8L1100.2 141.0Q1098.7 142.5 1097.0 142.6L1095.7 142.7Q1094.1 142.9 1091.7 140.5L1089.9 138.6Q1087.6 136.3 1088.4 134.1L1089.1 132.3Q1089.9 130.1 1091.5 129.9L1092.8 129.7Q1094.3 129.5 1096.4 129.9L1097.9 130.1Q1100.0 130.5 1101.0 133.3Z" fill="#d8d8d8"/>
<path d="M1099.5 126.9Q1100.8 127.9 1100.4 129.3L1100.0 130.3Q1099.6 131.7 1098.4 132.0L1097.5 132.1Q1096.3 132.4 1095.2 131.4L1094.4 130.7Q1093.3 129.7 1093.7 128.3L1094.0 127.2Q1094.3 125.7 1095.3 125.6L1096.1 125.5Q1097.1 125.3 1098.4 126.2Z" fill="#f4f4f4"/>
<path d="M1100.7 127.8Q1100.1 126.1 1101.0 125.0L1101.6 124.2Q1102.4 123.1 1104.6 123.0L1106.3 123.0Q1108.4 123.0 1109.3 123.6L1109.9 124.1Q1110.7 124.8 1110.6 126.2L1110.6 127.4Q1110.5 128.8 1108.4 129.9L1106.7 130.7Q1104.6 131.8 1103.6 131.5L1102.8 131.3Q1101.7 131.0 1101.2 129.2Z" fill="#ddd"/>
<path d="M1100.2 143.7Q1099.4 142.9 1099.9 141.3L1100.2 140.0Q1100.7 138.4 1101.5 138.4L1102.1 138.3Q1102.9 138.3 1104.2 138.7L1105.1 139.0Q1106.4 139.5 1106.5 140.6L1106.5 141.6Q1106.6 142.7 1105.8 143.9L1105.1 144.8Q1104.3 145.9 1103.3 145.6L1102.6 145.4Q1101.7 145.1 1100.9 144.3Z" fill="#d8d8d8"/>
<path d="M1127.2 132.0Q1127.9 131.5 1128.8 131.6L1129.6 131.7Q1130.6 131.8 1131.3 133.3L1131.8 134.5Q1132.5 136.0 1132.0 136.8L1131.7 137.5Q1131.2 138.3 1129.9 138.5L1128.8 138.6Q1127.5 138.8 1126.7 138.1L1126.2 137.6Q1125.4 136.9 1125.6 135.5L1125.8 134.4Q1126.0 133.0 1126.7 132.5Z" fill="#e0e0e0"/>
<path d="M1132.9 127.9Q1133.3 126.8 1134.1 126.6L1134.8 126.5Q1135.6 126.4 1136.4 126.5L1136.9 126.6Q1137.7 126.7 1137.8 127.3L1137.9 127.8Q1138.1 128.4 1137.9 129.5L1137.8 130.3Q1137.7 131.4 1136.8 131.8L1136.1 132.0Q1135.3 132.3 1134.5 132.2L1133.9 132.1Q1133.2 132.0 1132.9 131.2L1132.7 130.6Q1132.4 129.8 1132.7 128.7Z" fill="#eee"/>
<path d="M1138.8 131.8Q1140.3 132.5 1140.1 134.4L1140.0 135.8Q1139.9 137.7 1139.0 138.0L1138.3 138.3Q1137.5 138.7 1136.0 137.8L1134.8 137.2Q1133.3 136.3 1133.4 134.9L1133.5 133.8Q1133.6 132.4 1134.6 131.7L1135.3 131.2Q1136.3 130.5 1137.7 131.2Z" fill="#e8e8e8"/>
<path d="M1141.9 131.8Q1140.4 130.6 1140.6 129.2L1140.8 128.1Q1141.0 126.8 1142.2 126.0L1143.1 125.4Q1144.4 124.6 1145.7 125.1L1146.7 125.5Q1148.0 126.0 1148.5 127.2L1148.9 128.1Q1149.4 129.3 1148.9 130.5L1148.5 131.5Q1148.0 132.7 1146.8 133.2L1145.8 133.6Q1144.6 134.1 1143.1 132.8Z" fill="#f0f0f0"/>
<path d="M1135.8 143.8Q1136.2 145.0 1135.2 146.0L1134.5 146.8Q1133.5 147.8 1132.9 147.9L1132.5 148.0Q1132.0 148.2 1130.6 147.3L1129.5 146.7Q1128.1 145.9 1127.9 144.8L1127.7 144.0Q1127.5 143.0 1128.1 142.4L1128.7 141.9Q1129.3 141.3 1130.8 141.0L1132.0 140.8Q1133.5 140.5 1134.1 140.9L1134.5 141.2Q1135.1 141.5 1135.5 142.8Z" fill="#ccc"/>
<path d="M1154.6 134.1Q1155.4 134.8 1155.5 136.6L1155.6 138.0Q1155.7 139.8 1154.1 140.5L1152.9 141.1Q1151.3 141.8 1150.1 141.3L1149.2 141.0Q1148.1 140.5 1147.5 139.3L1147.1 138.3Q1146.5 137.1 1147.2 135.7L1147.8 134.6Q1148.5 133.2 1150.2 133.1L1151.5 133.0Q1153.2 132.8 1154.0 133.5Z" fill="#ececec"/>
<path d="M1125.5 128.2Q1126.2 128.5 1126.3 130.1L1126.3 131.3Q1126.4 132.9 1125.3 133.5L1124.4 134.0Q1123.3 134.6 1122.5 134.3L1121.9 134.1Q1121.0 133.8 1120.3 132.8L1119.8 132.0Q1119.1 131.1 1119.5 130.2L1119.9 129.5Q1120.3 128.6 1121.7 128.2L1122.8 127.9Q1124.2 127.5 1124.9 127.9Z" fill="#e8e8e8"/>
<path d="M1186.2 136.1Q1186.6 135.1 1187.8 134.9L1188.7 134.7Q1189.9 134.5 1190.8 135.5L1191.5 136.3Q1192.4 137.2 1191.9 138.7L1191.5 139.9Q1191.0 141.4 1189.7 141.7L1188.7 142.0Q1187.4 142.4 1186.7 140.7L1186.1 139.5Q1185.4 137.8 1185.8 136.9Z" fill="#d8d8d8"/>
<path d="M1193.7 143.9Q1192.4 143.2 1192.4 141.8L1192.4 140.8Q1192.4 139.4 1193.4 138.8L1194.3 138.4Q1195.3 137.9 1196.5 138.2L1197.5 138.4Q1198.7 138.7 1199.2 139.6L1199.5 140.3Q1199.9 141.2 1199.3 142.4L1198.9 143.2Q1198.3 144.4 1197.4 144.6L1196.8 144.8Q1196.0 145.1 1194.7 144.4Z" fill="#e4e4e4"/>
<path d="M1211.9 145.1Q1208.4 145.7 1207.3 145.0L1206.4 144.3Q1205.3 143.5 1204.6 140.7L1204.0 138.6Q1203.2 135.8 1205.7 133.9L1207.7 132.4Q1210.2 130.5 1212.4 131.0L1214.0 131.5Q1216.2 132.0 1217.8 133.3L1219.1 134.4Q1220.7 135.7 1219.7 138.7L1218.9 141.1Q1218.0 144.1 1214.5 144.7Z" fill="#d4d4d4"/>
<path d="M1226.3 134.9Q1226.8 136.8 1226.1 138.5L1225.6 139.9Q1224.9 141.6 1222.4 141.6L1220.5 141.7Q1218.0 141.7 1216.9 140.3L1216.1 139.1Q1215.0 137.7 1215.7 135.8L1216.2 134.3Q1216.9 132.4 1218.9 131.4L1220.4 130.5Q1222.4 129.5 1223.5 130.2L1224.3 130.7Q1225.4 131.4 1225.9 133.4Z" fill="#d8d8d8"/>
<path d="M1227.6 130.0Q1226.3 130.9 1225.1 130.8L1224.2 130.7Q1223.0 130.5 1222.1 129.1L1221.4 128.0Q1220.5 126.6 1221.2 125.7L1221.7 125.0Q1222.3 124.1 1223.6 123.4L1224.6 122.9Q1225.9 122.3 1227.0 123.1L1227.8 123.7Q1228.8 124.5 1229.2 125.9L1229.4 127.0Q1229.8 128.4 1228.5 129.3Z" fill="#d8d8d8"/>
<path d="M1236.7 130.0Q1236.7 131.0 1235.8 132.1L1235.2 132.9Q1234.3 134.0 1233.6 133.9L1233.0 133.9Q1232.2 133.8 1231.1 132.9L1230.3 132.2Q1229.2 131.3 1229.2 130.5L1229.3 129.9Q1229.3 129.1 1230.4 128.2L1231.2 127.4Q1232.3 126.5 1233.1 126.6L1233.7 126.6Q1234.5 126.7 1235.3 127.3L1236.0 127.8Q1236.8 128.4 1236.7 129.3Z" fill="#ddd"/>
<path d="M1223.2 137.7Q1224.4 135.0 1227.6 134.6L1230.1 134.3Q1233.3 133.8 1234.2 134.9L1234.9 135.7Q1235.9 136.8 1236.6 139.1L1237.1 140.9Q1237.8 143.2 1235.8 145.5L1234.2 147.2Q1232.1 149.5 1230.0 148.8L1228.3 148.3Q1226.2 147.6 1224.3 145.8L1222.9 144.4Q1221.0 142.6 1222.3 139.9Z" fill="#f8f8f8"/>
<path d="M1247.6 132.0Q1247.3 132.8 1246.4 133.3L1245.8 133.7Q1244.9 134.1 1244.0 134.2L1243.3 134.2Q1242.3 134.2 1241.6 132.9L1241.1 131.9Q1240.4 130.5 1240.4 129.7L1240.4 129.1Q1240.4 128.2 1241.8 127.7L1242.8 127.3Q1244.1 126.7 1244.7 126.6L1245.1 126.5Q1245.7 126.4 1246.6 127.9L1247.3 129.0Q1248.1 130.5 1247.8 131.4Z" fill="#eee"/>
<path d="M1245.9 127.2Q1246.3 125.7 1247.7 125.1L1248.7 124.7Q1250.1 124.1 1251.2 125.3L1252.0 126.3Q1253.1 127.5 1252.6 128.9L1252.2 129.9Q1251.7 131.3 1250.5 131.5L1249.5 131.7Q1248.2 131.9 1247.1 131.1L1246.3 130.5Q1245.2 129.7 1245.6 128.3Z" fill="#e4e4e4"/>
<path d="M1239.8 143.8Q1238.4 143.1 1238.1 141.6L1237.9 140.5Q1237.7 139.0 1239.5 137.3L1240.9 136.0Q1242.6 134.3 1243.9 134.9L1244.9 135.4Q1246.1 136.0 1246.3 138.4L1246.5 140.2Q1246.7 142.6 1245.1 143.4L1243.9 144.1Q1242.3 145.0 1240.9 144.3Z" fill="#e8e8e8"/>
<path d="M1246.1 138.5Q1246.0 137.3 1246.6 136.5L1247.0 135.9Q1247.6 135.1 1248.8 134.9L1249.7 134.8Q1250.9 134.6 1251.8 135.4L1252.4 136.0Q1253.3 136.8 1253.5 137.7L1253.7 138.3Q1254.0 139.1 1253.1 140.3L1252.4 141.1Q1251.5 142.3 1250.2 142.5L1249.1 142.6Q1247.8 142.8 1247.2 142.0L1246.8 141.4Q1246.3 140.6 1246.2 139.4Z" fill="#e4e4e4"/>
<path d="M1249.5 147.2Q1248.9 146.7 1248.3 145.5L1247.8 144.5Q1247.2 143.3 1247.9 142.2L1248.4 141.3Q1249.1 140.2 1249.9 140.1L1250.5 140.0Q1251.3 139.9 1252.7 140.7L1253.8 141.3Q1255.3 142.1 1255.3 143.0L1255.2 143.8Q1255.2 144.7 1254.7 145.8L1254.3 146.6Q1253.8 147.7 1252.6 147.8L1251.7 147.9Q1250.6 148.0 1250.0 147.5Z" fill="#ddd"/>
<path d="M1259.2 141.1Q1260.7 141.4 1260.8 142.8L1260.8 143.9Q1260.9 145.3 1259.8 146.3L1258.9 147.2Q1257.8 148.2 1256.3 147.8L1255.1 147.4Q1253.6 146.9 1253.3 145.9L1253.1 145.2Q1252.8 144.2 1254.1 142.8L1255.2 141.7Q1256.6 140.4 1258.1 140.8Z" fill="#eee"/>
<path d="M1265.5 124.7Q1265.6 123.4 1267.0 122.6L1268.0 121.9Q1269.4 121.1 1270.3 121.8L1271.1 122.4Q1272.1 123.1 1272.3 124.7L1272.5 125.9Q1272.7 127.5 1271.9 128.2L1271.3 128.8Q1270.6 129.6 1269.5 129.5L1268.7 129.5Q1267.7 129.4 1266.8 128.6L1266.1 127.9Q1265.2 127.0 1265.3 125.7Z" fill="#ddd"/>
<path d="M1265.8 127.4Q1266.8 126.8 1267.9 127.0L1268.7 127.1Q1269.8 127.3 1270.5 128.1L1271.1 128.8Q1271.8 129.6 1271.6 130.8L1271.5 131.7Q1271.3 132.9 1270.0 133.5L1268.9 133.9Q1267.6 134.5 1266.4 133.6L1265.5 133.0Q1264.4 132.1 1264.3 130.8L1264.1 129.8Q1264.0 128.5 1265.0 127.9Z" fill="#d4d4d4"/>
<path d="M1268.6 132.2Q1269.3 132.1 1270.4 132.4L1271.1 132.7Q1272.1 133.0 1272.6 133.9L1273.0 134.5Q1273.5 135.4 1273.5 136.4L1273.4 137.2Q1273.4 138.3 1271.9 138.8L1270.8 139.3Q1269.3 139.8 1268.6 139.5L1268.1 139.2Q1267.3 138.9 1266.7 137.6L1266.2 136.6Q1265.6 135.3 1266.2 134.3L1266.6 133.5Q1267.2 132.5 1268.0 132.3Z" fill="#e4e4e4"/>
<path d="M1268.2 138.9Q1269.1 138.3 1270.6 139.0L1271.7 139.5Q1273.1 140.2 1273.1 141.4L1273.0 142.3Q1272.9 143.5 1271.8 144.4L1270.9 145.1Q1269.8 146.0 1268.8 145.5L1268.1 145.0Q1267.1 144.5 1266.9 142.9L1266.7 141.7Q1266.5 140.1 1267.4 139.4Z" fill="#eee"/>
<path d="M1287.5 134.8Q1287.3 133.8 1287.8 132.9L1288.2 132.2Q1288.7 131.3 1290.3 131.4L1291.5 131.4Q1293.1 131.4 1293.7 131.8L1294.1 132.1Q1294.7 132.5 1294.4 134.1L1294.1 135.4Q1293.8 137.1 1293.1 137.4L1292.5 137.6Q1291.8 137.9 1290.4 137.4L1289.3 137.0Q1287.9 136.5 1287.7 135.5Z" fill="#e8e8e8"/>
<path d="M1298.4 136.4Q1299.3 137.0 1298.9 138.8L1298.5 140.2Q1298.0 141.9 1297.0 142.2L1296.3 142.5Q1295.3 142.8 1294.2 142.2L1293.4 141.8Q1292.4 141.2 1292.2 140.2L1292.1 139.5Q1292.0 138.5 1292.5 137.6L1292.9 136.9Q1293.4 136.0 1294.5 135.8L1295.4 135.6Q1296.6 135.3 1297.6 136.0Z" fill="#eee"/>
<path d="M1301.8 129.7Q1302.6 130.9 1301.9 131.7L1301.4 132.4Q1300.7 133.2 1299.2 133.3L1298.0 133.3Q1296.5 133.4 1295.9 132.1L1295.5 131.2Q1294.9 129.9 1295.6 129.1L1296.1 128.5Q1296.7 127.7 1298.0 127.7L1299.0 127.7Q1300.3 127.7 1301.1 128.8Z" fill="#f0f0f0"/>
<path d="M1296.6 123.6Q1296.9 123.2 1298.2 123.4L1299.2 123.6Q1300.5 123.8 1301.0 124.6L1301.3 125.2Q1301.7 126.0 1301.5 126.5L1301.4 127.0Q1301.2 127.5 1300.6 128.1L1300.1 128.5Q1299.5 129.0 1298.6 129.1L1297.8 129.2Q1296.9 129.3 1296.2 128.4L1295.7 127.7Q1295.0 126.7 1295.4 125.9L1295.7 125.2Q1296.1 124.4 1296.4 123.9Z" fill="#e4e4e4"/>
<path d="M1303.1 126.1Q1304.1 125.1 1304.8 125.1L1305.3 125.2Q1306.0 125.2 1306.8 126.4L1307.4 127.3Q1308.2 128.4 1308.2 129.1L1308.1 129.7Q1308.1 130.4 1307.2 131.3L1306.6 132.1Q1305.7 133.0 1305.1 132.8L1304.7 132.6Q1304.1 132.4 1303.2 131.5L1302.4 130.7Q1301.5 129.8 1301.4 129.1L1301.4 128.6Q1301.3 127.9 1302.3 126.9Z" fill="#d8d8d8"/>
<path d="M1325.0 132.3Q1326.4 133.2 1326.6 134.4L1326.8 135.4Q1327.0 136.6 1326.3 137.5L1325.8 138.1Q1325.1 139.0 1323.7 139.2L1322.6 139.4Q1321.3 139.6 1320.4 139.0L1319.8 138.5Q1319.0 137.8 1318.9 136.6L1318.8 135.6Q1318.7 134.4 1319.1 133.5L1319.4 132.9Q1319.8 132.1 1320.8 131.6L1321.6 131.2Q1322.6 130.7 1323.9 131.6Z" fill="#f4f4f4"/>
<path d="M1332.0 130.1Q1332.4 130.9 1331.8 132.2L1331.4 133.2Q1330.8 134.5 1329.2 134.3L1327.9 134.2Q1326.2 134.0 1325.5 133.5L1324.9 133.1Q1324.2 132.6 1324.4 131.4L1324.5 130.4Q1324.7 129.2 1325.5 128.2L1326.2 127.4Q1327.0 126.4 1328.6 127.3L1329.8 127.9Q1331.4 128.7 1331.8 129.5Z" fill="#ddd"/>
<path d="M1336.7 132.1Q1337.9 132.6 1338.0 133.7L1338.1 134.6Q1338.2 135.7 1337.4 136.5L1336.8 137.2Q1336.0 138.0 1334.3 137.6L1333.0 137.3Q1331.3 136.9 1331.5 135.7L1331.6 134.8Q1331.7 133.5 1332.7 132.7L1333.4 132.0Q1334.4 131.1 1335.7 131.7Z" fill="#e4e4e4"/>
<path d="M1334.7 145.2Q1334.9 146.4 1333.2 147.6L1332.0 148.5Q1330.3 149.6 1328.4 149.2L1327.0 148.9Q1325.1 148.5 1324.1 147.3L1323.3 146.4Q1322.3 145.3 1322.7 143.1L1323.1 141.3Q1323.6 139.1 1324.7 138.1L1325.5 137.3Q1326.6 136.3 1328.8 136.8L1330.5 137.2Q1332.7 137.6 1333.3 139.5L1333.8 141.0Q1334.4 142.9 1334.6 144.2Z" fill="#e8e8e8"/>
<path d="M1343.4 142.0Q1343.8 143.4 1343.0 144.5L1342.5 145.3Q1341.7 146.3 1340.3 146.9L1339.2 147.3Q1337.7 147.8 1336.4 146.7L1335.4 145.8Q1334.1 144.6 1334.0 143.7L1333.9 142.9Q1333.8 141.9 1334.7 140.6L1335.3 139.5Q1336.2 138.1 1337.8 138.0L1339.0 138.0Q1340.5 137.8 1341.3 138.4L1342.0 138.8Q1342.8 139.4 1343.2 140.8Z" fill="#d4d4d4"/>
<path d="M1347.6 140.3Q1348.2 141.1 1347.7 142.3L1347.4 143.2Q1347.0 144.4 1346.1 144.9L1345.4 145.4Q1344.5 146.0 1343.1 145.0L1342.0 144.3Q1340.5 143.4 1340.2 142.7L1339.9 142.2Q1339.6 141.5 1340.7 140.2L1341.6 139.3Q1342.7 138.0 1344.1 138.3L1345.2 138.5Q1346.5 138.8 1347.1 139.6Z" fill="#eee"/>
<path d="M1346.8 132.0Q1347.1 130.8 1348.6 130.2L1349.7 129.7Q1351.1 129.1 1352.2 130.0L1353.0 130.6Q1354.1 131.5 1353.8 132.9L1353.6 134.0Q1353.3 135.4 1351.9 136.3L1350.8 136.9Q1349.4 137.8 1348.3 136.5L1347.4 135.6Q1346.3 134.3 1346.6 133.1Z" fill="#f0f0f0"/>
</g>
<rect x="833.0" y="153.0" width="525.5" height="100.9" fill="#fffb9b"/>
<path d="M781.19 166.34A17.8 17.8 0 0 1 815.55 166.34L833.06 230.94A17.8 17.8 0 1 1 798.70 230.94L816.22 166.34A17.8 17.8 0 0 1 850.58 166.34L868.10 230.94A17.8 17.8 0 1 1 833.74 230.94L851.25 166.34A17.8 17.8 0 0 1 885.61 166.34L903.13 230.94A17.8 17.8 0 1 1 868.77 230.94L886.29 166.34A17.8 17.8 0 0 1 920.65 166.34L938.16 230.94A17.8 17.8 0 1 1 903.80 230.94L921.32 166.34A17.8 17.8 0 0 1 955.68 166.34L973.20 230.94A17.8 17.8 0 1 1 938.84 230.94L956.35 166.34A17.8 17.8 0 0 1 990.71 166.34L1008.23 230.94A17.8 17.8 0 1 1 973.87 230.94L991.39 166.34A17.8 17.8 0 0 1 1025.75 166.34L1043.26 230.94A17.8 17.8 0 1 1 1008.90 230.94L1026.42 166.34A17.8 17.8 0 0 1 1060.78 166.34L1078.30 230.94A17.8 17.8 0 1 1 1043.94 230.94L1061.45 166.34A17.8 17.8 0 0 1 1095.81 166.34L1113.33 230.94A17.8 17.8 0 1 1 1078.97 230.94L1096.49 166.34A17.8 17.8 0 0 1 1130.85 166.34L1148.36 230.94A17.8 17.8 0 1 1 1114.00 230.94L1131.52 166.34A17.8 17.8 0 0 1 1165.88 166.34L1183.40 230.94A17.8 17.8 0 1 1 1149.04 230.94L1166.55 166.34A17.8 17.8 0 0 1 1200.91 166.34L1218.43 230.94A17.8 17.8 0 1 1 1184.07 230.94L1201.59 166.34A17.8 17.8 0 0 1 1235.95 166.34L1253.46 230.94A17.8 17.8 0 1 1 1219.10 230.94L1236.62 166.34A17.8 17.8 0 0 1 1270.98 166.34L1288.50 230.94A17.8 17.8 0 1 1 1254.14 230.94L1271.65 166.34A17.8 17.8 0 0 1 1306.01 166.34L1323.53 230.94A17.8 17.8 0 1 1 1289.17 230.94L1306.69 166.34A17.8 17.8 0 0 1 1341.05 166.34L1358.56 230.94A17.8 17.8 0 1 1 1324.20 230.94L1341.72 166.34A17.8 17.8 0 0 1 1376.08 166.34L1393.60 230.94A17.8 17.8 0 1 1 1359.24 230.94" fill="none" stroke="#5f5a10" stroke-width="0.9" clip-path="url(#cpx)"/>
<rect x="833.0" y="253.9" width="525.5" height="3.200000000000017" fill="#fbfbf4"/>
<rect x="833.0" y="151.0" width="525.5" height="2.0" fill="#f3f3ec"/>
<rect x="833.0" y="151.0" width="26.3" height="2.0" fill="#0c0c00"/>
<rect x="833.0" y="253.9" width="26.3" height="3.2" fill="#000"/>
<rect x="885.5" y="151.0" width="26.3" height="2.0" fill="#0c0c00"/>
<rect x="885.5" y="253.9" width="26.3" height="3.2" fill="#000"/>
<rect x="938.1" y="151.0" width="26.3" height="2.0" fill="#0c0c00"/>
<rect x="938.1" y="253.9" width="26.3" height="3.2" fill="#000"/>
<rect x="990.6" y="151.0" width="26.3" height="2.0" fill="#0c0c00"/>
<rect x="990.6" y="253.9" width="26.3" height="3.2" fill="#000"/>
<rect x="1043.2" y="151.0" width="26.3" height="2.0" fill="#0c0c00"/>
<rect x="1043.2" y="253.9" width="26.3" height="3.2" fill="#000"/>
<rect x="1095.8" y="151.0" width="26.3" height="2.0" fill="#0c0c00"/>
<rect x="1095.8" y="253.9" width="26.3" height="3.2" fill="#000"/>
<rect x="1148.3" y="151.0" width="26.3" height="2.0" fill="#0c0c00"/>
<rect x="1148.3" y="253.9" width="26.3" height="3.2" fill="#000"/>
<rect x="1200.8" y="151.0" width="26.3" height="2.0" fill="#0c0c00"/>
<rect x="1200.8" y="253.9" width="26.3" height="3.2" fill="#000"/>
<rect x="1253.4" y="151.0" width="26.3" height="2.0" fill="#0c0c00"/>
<rect x="1253.4" y="253.9" width="26.3" height="3.2" fill="#000"/>
<rect x="1306.0" y="151.0" width="26.3" height="2.0" fill="#0c0c00"/>
<rect x="1306.0" y="253.9" width="26.3" height="3.2" fill="#000"/>
<path d="M842.5 144.6C843.4 146.5 845.3 147.9 845.3 149.6A2.8 2.8 0 0 1 839.7 149.6C839.7 147.9 841.6 146.5 842.5 144.6Z" fill="url(#dg)" stroke="#f4fbff" stroke-width="3.2" stroke-linejoin="round" paint-order="stroke fill"/>
<path d="M864.2 147.8C865.1 149.7 867.0 151.1 867.0 152.8A2.8 2.8 0 0 1 861.4 152.8C861.4 151.1 863.3 149.7 864.2 147.8Z" fill="url(#dg)" stroke="#f4fbff" stroke-width="3.2" stroke-linejoin="round" paint-order="stroke fill"/>
<path d="M903.8 147.4C904.7 149.3 906.6 150.7 906.6 152.4A2.8 2.8 0 0 1 901.0 152.4C901.0 150.7 902.9 149.3 903.8 147.4Z" fill="url(#dg)" stroke="#f4fbff" stroke-width="3.2" stroke-linejoin="round" paint-order="stroke fill"/>
<path d="M935.2 145.6C936.1 147.5 938.0 148.9 938.0 150.6A2.8 2.8 0 0 1 932.4 150.6C932.4 148.9 934.3 147.5 935.2 145.6Z" fill="url(#dg)" stroke="#f4fbff" stroke-width="3.2" stroke-linejoin="round" paint-order="stroke fill"/>
<path d="M967.4 149.5C968.3 151.4 970.2 152.8 970.2 154.5A2.8 2.8 0 0 1 964.6 154.5C964.6 152.8 966.5 151.4 967.4 149.5Z" fill="url(#dg)" stroke="#f4fbff" stroke-width="3.2" stroke-linejoin="round" paint-order="stroke fill"/>
<path d="M991.3 145.2C992.2 147.1 994.1 148.5 994.1 150.2A2.8 2.8 0 0 1 988.5 150.2C988.5 148.5 990.4 147.1 991.3 145.2Z" fill="url(#dg)" stroke="#f4fbff" stroke-width="3.2" stroke-linejoin="round" paint-order="stroke fill"/>
<path d="M1033.1 147.1C1034.0 149.0 1035.9 150.4 1035.9 152.1A2.8 2.8 0 0 1 1030.3 152.1C1030.3 150.4 1032.2 149.0 1033.1 147.1Z" fill="url(#dg)" stroke="#f4fbff" stroke-width="3.2" stroke-linejoin="round" paint-order="stroke fill"/>
<path d="M1058.9 144.5C1059.8 146.4 1061.7 147.8 1061.7 149.5A2.8 2.8 0 0 1 1056.1 149.5C1056.1 147.8 1058.0 146.4 1058.9 144.5Z" fill="url(#dg)" stroke="#f4fbff" stroke-width="3.2" stroke-linejoin="round" paint-order="stroke fill"/>
<path d="M1109.3 148.1C1110.2 150.0 1112.1 151.4 1112.1 153.1A2.8 2.8 0 0 1 1106.5 153.1C1106.5 151.4 1108.4 150.0 1109.3 148.1Z" fill="url(#dg)" stroke="#f4fbff" stroke-width="3.2" stroke-linejoin="round" paint-order="stroke fill"/>
<path d="M1143.5 146.4C1144.4 148.3 1146.3 149.7 1146.3 151.4A2.8 2.8 0 0 1 1140.7 151.4C1140.7 149.7 1142.6 148.3 1143.5 146.4Z" fill="url(#dg)" stroke="#f4fbff" stroke-width="3.2" stroke-linejoin="round" paint-order="stroke fill"/>
<path d="M1173.4 149.4C1174.3 151.3 1176.2 152.7 1176.2 154.4A2.8 2.8 0 0 1 1170.6 154.4C1170.6 152.7 1172.5 151.3 1173.4 149.4Z" fill="url(#dg)" stroke="#f4fbff" stroke-width="3.2" stroke-linejoin="round" paint-order="stroke fill"/>
<path d="M1212.0 144.5C1212.9 146.4 1214.8 147.8 1214.8 149.5A2.8 2.8 0 0 1 1209.2 149.5C1209.2 147.8 1211.1 146.4 1212.0 144.5Z" fill="url(#dg)" stroke="#f4fbff" stroke-width="3.2" stroke-linejoin="round" paint-order="stroke fill"/>
<path d="M1233.5 147.3C1234.4 149.2 1236.3 150.6 1236.3 152.3A2.8 2.8 0 0 1 1230.7 152.3C1230.7 150.6 1232.6 149.2 1233.5 147.3Z" fill="url(#dg)" stroke="#f4fbff" stroke-width="3.2" stroke-linejoin="round" paint-order="stroke fill"/>
<path d="M1272.9 146.8C1273.8 148.7 1275.7 150.1 1275.7 151.8A2.8 2.8 0 0 1 1270.1 151.8C1270.1 150.1 1272.0 148.7 1272.9 146.8Z" fill="url(#dg)" stroke="#f4fbff" stroke-width="3.2" stroke-linejoin="round" paint-order="stroke fill"/>
<path d="M1304.5 145.1C1305.4 147.0 1307.3 148.4 1307.3 150.1A2.8 2.8 0 0 1 1301.7 150.1C1301.7 148.4 1303.6 147.0 1304.5 145.1Z" fill="url(#dg)" stroke="#f4fbff" stroke-width="3.2" stroke-linejoin="round" paint-order="stroke fill"/>
<path d="M1336.4 149.0C1337.3 150.9 1339.2 152.3 1339.2 154.0A2.8 2.8 0 0 1 1333.6 154.0C1333.6 152.3 1335.5 150.9 1336.4 149.0Z" fill="url(#dg)" stroke="#f4fbff" stroke-width="3.2" stroke-linejoin="round" paint-order="stroke fill"/>
<rect x="833.0" y="257.1" width="525.5" height="12.7" fill="#ddae86"/>
<path d="M841.8 257.1V269.8M850.5 257.1V269.8M859.3 257.1V269.8M868.0 257.1V269.8M876.8 257.1V269.8M885.5 257.1V269.8M894.3 257.1V269.8M903.1 257.1V269.8M911.8 257.1V269.8M920.6 257.1V269.8M929.3 257.1V269.8M938.1 257.1V269.8M946.9 257.1V269.8M955.6 257.1V269.8M964.4 257.1V269.8M973.1 257.1V269.8M981.9 257.1V269.8M990.6 257.1V269.8M999.4 257.1V269.8M1008.2 257.1V269.8M1016.9 257.1V269.8M1025.7 257.1V269.8M1034.4 257.1V269.8M1043.2 257.1V269.8M1052.0 257.1V269.8M1060.7 257.1V269.8M1069.5 257.1V269.8M1078.2 257.1V269.8M1087.0 257.1V269.8M1095.8 257.1V269.8M1104.5 257.1V269.8M1113.3 257.1V269.8M1122.0 257.1V269.8M1130.8 257.1V269.8M1139.5 257.1V269.8M1148.3 257.1V269.8M1157.1 257.1V269.8M1165.8 257.1V269.8M1174.6 257.1V269.8M1183.3 257.1V269.8M1192.1 257.1V269.8M1200.8 257.1V269.8M1209.6 257.1V269.8M1218.4 257.1V269.8M1227.1 257.1V269.8M1235.9 257.1V269.8M1244.6 257.1V269.8M1253.4 257.1V269.8M1262.2 257.1V269.8M1270.9 257.1V269.8M1279.7 257.1V269.8M1288.4 257.1V269.8M1297.2 257.1V269.8M1306.0 257.1V269.8M1314.7 257.1V269.8M1323.5 257.1V269.8M1332.2 257.1V269.8M1341.0 257.1V269.8M1349.7 257.1V269.8" stroke="#b08058" stroke-width="0.9" fill="none"/>
<rect x="833.0" y="257.1" width="525.5" height="12.7" fill="none" stroke="#b08058" stroke-width="0.8"/>
<rect x="886.3" y="269.8" width="50.2" height="127.4" fill="#ddae86"/>
<g clip-path="url(#cpb1)" fill="none" stroke="#7a6650" stroke-width="0.68">
<ellipse cx="887.8" cy="333.1" rx="9.0" ry="8.8"/>
<ellipse cx="887.8" cy="332.9" rx="17.4" ry="17.2"/>
<ellipse cx="887.8" cy="332.7" rx="25.8" ry="25.6"/>
<ellipse cx="887.8" cy="332.5" rx="34.2" ry="34.0"/>
<ellipse cx="887.8" cy="332.3" rx="42.6" ry="42.4"/>
<ellipse cx="887.8" cy="332.1" rx="51.0" ry="50.8"/>
<ellipse cx="887.8" cy="331.9" rx="59.4" ry="59.2"/>
<ellipse cx="887.8" cy="331.7" rx="67.8" ry="67.6"/>
<ellipse cx="887.8" cy="331.5" rx="76.2" ry="76.0"/>
<ellipse cx="887.8" cy="331.3" rx="84.6" ry="84.4"/>
</g>
<circle cx="887.8" cy="333.3" r="1.7" fill="#ddae86" stroke="#6f5a45" stroke-width="0.8"/>
<rect x="886.3" y="269.8" width="50.2" height="127.4" fill="none" stroke="#a68a70" stroke-width="1"/>
<rect x="1255.2" y="269.8" width="50.2" height="127.4" fill="#ddae86"/>
<g clip-path="url(#cpb2)" fill="none" stroke="#7a6650" stroke-width="0.68">
<ellipse cx="1256.7" cy="333.1" rx="9.0" ry="8.8"/>
<ellipse cx="1256.7" cy="332.9" rx="17.4" ry="17.2"/>
<ellipse cx="1256.7" cy="332.7" rx="25.8" ry="25.6"/>
<ellipse cx="1256.7" cy="332.5" rx="34.2" ry="34.0"/>
<ellipse cx="1256.7" cy="332.3" rx="42.6" ry="42.4"/>
<ellipse cx="1256.7" cy="332.1" rx="51.0" ry="50.8"/>
<ellipse cx="1256.7" cy="331.9" rx="59.4" ry="59.2"/>
<ellipse cx="1256.7" cy="331.7" rx="67.8" ry="67.6"/>
<ellipse cx="1256.7" cy="331.5" rx="76.2" ry="76.0"/>
<ellipse cx="1256.7" cy="331.3" rx="84.6" ry="84.4"/>
</g>
<circle cx="1256.7" cy="333.3" r="1.7" fill="#ddae86" stroke="#6f5a45" stroke-width="0.8"/>
<rect x="1255.2" y="269.8" width="50.2" height="127.4" fill="none" stroke="#a68a70" stroke-width="1"/>
<path d="M833.0 397.2H1358.5" stroke="#6a6a6a" stroke-width="0.9"/>
<g stroke="#666" stroke-width="1.1" fill="none"><path d="M793.3 125.6V397.2"/>
<path d="M788.3 125.6H798.3"/>
<path d="M788.3 151.5H798.3"/>
<path d="M788.3 253.9H798.3"/>
<path d="M788.3 257.1H798.3"/>
<path d="M788.3 269.8H798.3"/>
<path d="M788.3 397.2H798.3"/>
</g>
<g stroke="#777" stroke-width="1.1" fill="none"><path d="M886.3 427.3H1255.2"/>
<path d="M886.3 422.3V432.3"/>
<path d="M936.5 422.3V432.3"/>
<path d="M1255.2 422.3V432.3"/>
</g>
<g font-family="Liberation Sans, Arial, sans-serif" font-size="14" fill="#888">
<text x="1095.7" y="119" text-anchor="middle">Außen</text>
<text x="1095.7" y="414" text-anchor="middle">Innen</text>
<text x="1358.5" y="414" text-anchor="end" fill="#bbb">ubakus.de</text>
<text x="798" y="144">40</text>
<text x="798" y="208">160</text>
<text x="798" y="268">20</text>
<text x="798" y="338">200</text>
<text transform="translate(786.5 262) rotate(-90)" text-anchor="middle">426</text>
<text x="911.3" y="442" text-anchor="middle">80</text>
<text x="1095.7" y="442" text-anchor="middle">500</text>
</g>
<g font-family="Liberation Sans, Arial, sans-serif" font-size="14.3" fill="#000" text-anchor="middle">
<circle cx="1075.5" cy="397.2" r="9.4" fill="#fff" stroke="#222" stroke-width="1"/><text x="1075.5" y="402.3">1</text>
<circle cx="1075.5" cy="333.2" r="9.4" fill="#fff" stroke="#222" stroke-width="1"/><text x="1075.5" y="338.3">2</text>
<circle cx="1075.5" cy="263.2" r="9.4" fill="#fff" stroke="#222" stroke-width="1"/><text x="1075.5" y="268.3">3</text>
<circle cx="1095.6" cy="254.9" r="9.4" fill="#fff" stroke="#222" stroke-width="1"/><text x="1095.6" y="260.0">4</text>
<circle cx="1095.6" cy="202.6" r="9.4" fill="#fff" stroke="#222" stroke-width="1"/><text x="1095.6" y="207.7">5</text>
<circle cx="1095.6" cy="151.6" r="9.4" fill="#fff" stroke="#222" stroke-width="1"/><text x="1095.6" y="156.7">6</text>
<circle cx="1115.2" cy="137.9" r="9.4" fill="#fff" stroke="#222" stroke-width="1"/><text x="1115.2" y="143.0">7</text>
</g>
</svg>
<div class="note">Gewerbliche Nutzung nur mit kostenpflichtigem Zugang. <span>Weitere Infos</span></div>
</div>
<div class="panel">
<div class="pin">
<div class="uw" style="left:171px;top:723.5px"><span class="u1">U-Wert:</span><span class="u2">0,227</span><span class="u3">W/m²K</span></div>
<svg class="ic" style="left:384px;top:734px" width="16.5" height="16" viewBox="0 0 19 18"><path d="M17.6 15.1L9.2 6.7A4.6 4.6 0 0 0 3.4 0.9L6.3 3.8L5.7 5.9L3.6 6.5L0.7 3.6A4.6 4.6 0 0 0 6.5 9.4L14.9 17.8A1.9 1.9 0 0 0 17.6 15.1Z" fill="#c8c8c8"/></svg>
<div class="tr" style="left:172px;top:762px;width:230px;height:10px"><div class="fl" style="width:52px;background:linear-gradient(#92d062,#86c656)"></div></div><div class="ln" style="left:172px;top:772px;width:231px;background:linear-gradient(rgba(255,255,255,.34),rgba(255,255,255,.34)),linear-gradient(90deg,#7d9c68 0%,#7d9c68 24.7%,#963232 24.7%,#963232 100%)"></div><div class="st big" style="left:172px;top:773px;width:230px;background:linear-gradient(90deg,#7d9c68 0%,#7d9c68 24.7%,#963232 24.7%,#963232 100%)"></div>
<div class="pt" style="left:171px;top:781.5px;">EnEV Bestand: U ≤ 0.24*</div>
<div class="dd" style="left:322px;top:782px"><b></b></div>
<div class="pt" style="left:171px;top:808.5px;">PEI n.e.: &gt;226 kWh/m²</div>
<div class="tr" style="left:172px;top:826px;width:230px;height:7px"><div class="fl" style="width:155px;background:linear-gradient(#eda030,#d98a18)"></div></div><div class="ln" style="left:172px;top:833px;width:231px;background:linear-gradient(rgba(255,255,255,.34),rgba(255,255,255,.34)),linear-gradient(90deg,#7d9c68 0%,#7d9c68 42%,#b9aa4e 62%,#b8763a 78%,#963232 95%,#963232 100%)"></div><div class="st" style="left:172px;top:835px;width:230px;background:linear-gradient(90deg,#7d9c68 0%,#7d9c68 42%,#b9aa4e 62%,#b8763a 78%,#963232 95%,#963232 100%)"></div>
<div class="pf" style="left:171px;top:843.5px;">sehr gut</div>
<div class="pf" style="left:172px;top:843.5px;width:231px;text-align:right">mangelhaft</div>
<div class="pt" style="left:423px;top:728.5px;">Tauwasser: 0,0029 kg/m²</div>
<div class="tr" style="left:424px;top:746px;width:230px;height:7px"><div class="fl" style="width:2px;background:linear-gradient(#92d062,#86c656)"></div></div><div class="ln" style="left:424px;top:753px;width:231px;background:linear-gradient(rgba(255,255,255,.34),rgba(255,255,255,.34)),linear-gradient(90deg,#7d9c68 0%,#7d9c68 62%,#b9aa4e 80%,#963232 93%,#963232 100%)"></div><div class="st" style="left:424px;top:755px;width:230px;background:linear-gradient(90deg,#7d9c68 0%,#7d9c68 62%,#b9aa4e 80%,#963232 93%,#963232 100%)"></div>
<div class="pt" style="left:423px;top:768.5px;">Holzfeuchte: +0,0 %</div>
<div class="tr" style="left:424px;top:786px;width:230px;height:7px"><div class="fl" style="width:2px;background:linear-gradient(#92d062,#86c656)"></div></div><div class="ln" style="left:424px;top:793px;width:231px;background:linear-gradient(rgba(255,255,255,.34),rgba(255,255,255,.34)),linear-gradient(90deg,#7d9c68 0%,#7d9c68 22%,#b9aa4e 33%,#963232 47%,#963232 100%)"></div><div class="st" style="left:424px;top:795px;width:230px;background:linear-gradient(90deg,#7d9c68 0%,#7d9c68 22%,#b9aa4e 33%,#963232 47%,#963232 100%)"></div>
<div class="pt" style="left:423px;top:808.5px;">Trocknungsdauer: 24 Tage</div>
<div class="tr" style="left:424px;top:826px;width:230px;height:7px"><div class="fl" style="width:55px;background:linear-gradient(#92d062,#86c656)"></div></div><div class="ln" style="left:424px;top:833px;width:231px;background:linear-gradient(rgba(255,255,255,.34),rgba(255,255,255,.34)),linear-gradient(90deg,#7d9c68 0%,#7d9c68 35%,#b9aa4e 58%,#b8763a 75%,#963232 92%,#963232 100%)"></div><div class="st" style="left:424px;top:835px;width:230px;background:linear-gradient(90deg,#7d9c68 0%,#7d9c68 35%,#b9aa4e 58%,#b8763a 75%,#963232 92%,#963232 100%)"></div>
<div class="pf" style="left:423px;top:843.5px;">sehr gut</div>
<div class="pf" style="left:424px;top:843.5px;width:231px;text-align:right">mangelhaft</div>
<div class="pt" style="left:675px;top:728.5px;">sd-Wert: 364 m</div>
<div class="pt" style="left:676px;top:728.5px;width:231px;text-align:right">Dicke: 42,6 cm</div>
<div class="pt" style="left:676px;top:746.5px;width:231px;text-align:right">Gewicht: 109 kg/m²</div>
<div class="pt" style="left:675px;top:766.5px;">Oberfläche innen: 18,6°C (55%)</div>
<div class="tr" style="left:676px;top:784px;width:230px;height:7px"><div class="fl" style="width:103px;background:linear-gradient(#92d062,#86c656)"></div></div><div class="ln" style="left:676px;top:791px;width:231px;background:linear-gradient(rgba(255,255,255,.34),rgba(255,255,255,.34)),linear-gradient(90deg,#963232 0%,#963232 14%,#b9aa4e 26%,#7d9c68 40%,#7d9c68 100%)"></div><div class="st" style="left:676px;top:793px;width:230px;background:linear-gradient(90deg,#963232 0%,#963232 14%,#b9aa4e 26%,#7d9c68 40%,#7d9c68 100%)"></div>
<div class="pt" style="left:675px;top:806.5px;">Trocknungsreserve: 8 g/m²a</div>
<div class="tr" style="left:676px;top:824px;width:230px;height:7px"></div><div class="ln" style="left:676px;top:831px;width:231px;background:#8f8f8f"></div>
<div class="pf" style="left:675px;top:841.5px;">mangelhaft</div>
<div class="pf" style="left:676px;top:841.5px;width:231px;text-align:right">sehr gut</div>
<div class="pt" style="left:927px;top:728.5px;">Temp.Ampl.Dämpfung (1/TAV): 9,4</div>
<div class="tr" style="left:928px;top:746px;width:230px;height:7px"><div class="fl" style="width:108px;background:linear-gradient(#92d062,#86c656)"></div></div><div class="ln" style="left:928px;top:753px;width:231px;background:linear-gradient(rgba(255,255,255,.34),rgba(255,255,255,.34)),linear-gradient(90deg,#963232 0%,#963232 4%,#b9aa4e 12%,#7d9c68 25%,#7d9c68 100%)"></div><div class="st" style="left:928px;top:755px;width:230px;background:linear-gradient(90deg,#963232 0%,#963232 4%,#b9aa4e 12%,#7d9c68 25%,#7d9c68 100%)"></div>
<div class="pt" style="left:927px;top:768.5px;">Phasenverschiebung: 7,8 h</div>
<div class="tr" style="left:928px;top:786px;width:230px;height:7px"><div class="fl" style="width:100px;background:linear-gradient(#92d062,#86c656)"></div></div><div class="ln" style="left:928px;top:793px;width:231px;background:linear-gradient(rgba(255,255,255,.34),rgba(255,255,255,.34)),linear-gradient(90deg,#963232 0%,#963232 8%,#b9aa4e 22%,#7d9c68 38%,#7d9c68 100%)"></div><div class="st" style="left:928px;top:795px;width:230px;background:linear-gradient(90deg,#963232 0%,#963232 8%,#b9aa4e 22%,#7d9c68 38%,#7d9c68 100%)"></div>
<div class="pt" style="left:927px;top:808.5px;">Speicherfähigkeit innen: 31 kJ/m²K</div>
<div class="tr" style="left:928px;top:826px;width:230px;height:7px"><div class="fl" style="width:71px;background:linear-gradient(#e6e040,#cfc522)"></div></div><div class="ln" style="left:928px;top:833px;width:231px;background:linear-gradient(rgba(255,255,255,.34),rgba(255,255,255,.34)),linear-gradient(90deg,#963232 0%,#963232 8%,#b9aa4e 20%,#7d9c68 35%,#7d9c68 100%)"></div><div class="st" style="left:928px;top:835px;width:230px;background:linear-gradient(90deg,#963232 0%,#963232 8%,#b9aa4e 20%,#7d9c68 35%,#7d9c68 100%)"></div>
<div class="pf" style="left:927px;top:843.5px;">mangelhaft</div>
<div class="pf" style="left:928px;top:843.5px;width:231px;text-align:right">sehr gut</div>
</div></div>
<div class="ystrip"></div>
<div class="blk"></div>
</body></html>
